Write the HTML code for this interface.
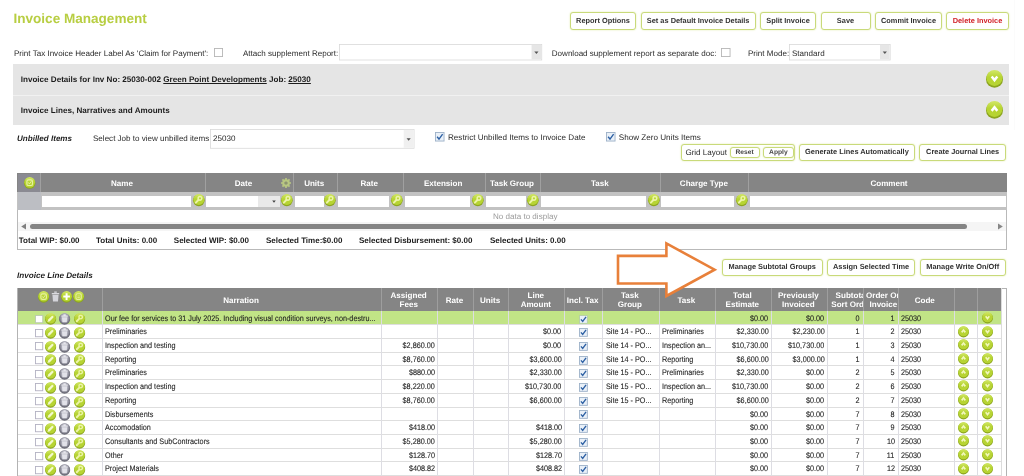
<!DOCTYPE html>
<html><head><meta charset="utf-8"><title>Invoice Management</title>
<style>
html,body{margin:0;padding:0;background:#fff;}
body{width:1024px;height:476px;overflow:hidden;position:relative;font-family:"Liberation Sans", Arial, sans-serif;}
.btn{position:absolute;box-sizing:border-box;border:1px solid #c9da7a;border-radius:3px;background:#fff;text-align:center;font-weight:bold;white-space:nowrap;box-shadow:0 0 2px #e0ebac;}
.hl{position:absolute;background:#a3a3a3;width:1px;}
</style></head><body><div id="wrap" style="position:absolute;left:0;top:0;width:1024px;height:476px;overflow:hidden;will-change:transform;text-rendering:geometricPrecision;">
<div style="position:absolute;top:13.40px;line-height:12.0px;font-size:13.55px;font-weight:bold;color:#b8ce42;font-style:normal;white-space:nowrap;left:13.50px;">Invoice Management</div>
<div class="btn" style="left:570.00px;top:12.00px;width:66.00px;height:17.60px;line-height:15.60px;font-size:7.4px;color:#333;">Report Options</div>
<div class="btn" style="left:640.50px;top:12.00px;width:115.30px;height:17.60px;line-height:15.60px;font-size:7.4px;color:#333;">Set as Default Invoice Details</div>
<div class="btn" style="left:760.00px;top:12.00px;width:56.00px;height:17.60px;line-height:15.60px;font-size:7.4px;color:#333;">Split Invoice</div>
<div class="btn" style="left:820.50px;top:12.00px;width:50.00px;height:17.60px;line-height:15.60px;font-size:7.4px;color:#333;">Save</div>
<div class="btn" style="left:875.00px;top:12.00px;width:67.00px;height:17.60px;line-height:15.60px;font-size:7.4px;color:#333;">Commit Invoice</div>
<div class="btn" style="left:946.00px;top:12.00px;width:63.00px;height:17.60px;line-height:15.60px;font-size:7.4px;color:#d2232a;">Delete Invoice</div>
<div style="position:absolute;top:48.31px;line-height:12.0px;font-size:8.05px;font-weight:normal;color:#2a2a2a;font-style:normal;white-space:nowrap;left:14.00px;">Print Tax Invoice Header Label As &#x27;Claim for Payment&#x27;:</div>
<svg style="position:absolute;left:213.00px;top:47.30px;width:11.00px;height:11.00px" viewBox="-1 -1 11.00 11.00"><rect x="0.45" y="0.45" width="8.10" height="8.10" fill="#fff" stroke="#b6b6b6" stroke-width="0.9"/></svg>
<div style="position:absolute;top:48.31px;line-height:12.0px;font-size:8.05px;font-weight:normal;color:#2a2a2a;font-style:normal;white-space:nowrap;left:243.00px;">Attach supplement Report:</div>
<svg style="position:absolute;left:338.40px;top:43.10px;width:205.20px;height:18.40px" viewBox="-1 -1 205.20 18.40"><rect x="0.4" y="0.4" width="202.40" height="15.60" fill="#fff" stroke="#d9d9d9" stroke-width="0.8"/><rect x="192.60" y="0.9" width="9.70" height="14.60" fill="#e6e6e6"/><path d="M195.35 7.60 h4.2 l-2.1 2.5 Z" fill="#555"/></svg>
<div style="position:absolute;top:48.31px;line-height:12.0px;font-size:8.05px;font-weight:normal;color:#2a2a2a;font-style:normal;white-space:nowrap;left:551.80px;">Download supplement report as separate doc:</div>
<svg style="position:absolute;left:720.00px;top:47.30px;width:11.50px;height:11.00px" viewBox="-1 -1 11.50 11.00"><rect x="0.45" y="0.45" width="8.60" height="8.10" fill="#fff" stroke="#b6b6b6" stroke-width="0.9"/></svg>
<div style="position:absolute;top:48.31px;line-height:12.0px;font-size:8.05px;font-weight:normal;color:#2a2a2a;font-style:normal;white-space:nowrap;left:748.00px;">Print Mode:</div>
<svg style="position:absolute;left:788.00px;top:43.10px;width:103.60px;height:18.40px" viewBox="-1 -1 103.60 18.40"><rect x="0.4" y="0.4" width="100.80" height="15.60" fill="#fff" stroke="#d9d9d9" stroke-width="0.8"/><rect x="91.00" y="0.9" width="9.70" height="14.60" fill="#e6e6e6"/><path d="M93.75 7.60 h4.2 l-2.1 2.5 Z" fill="#555"/></svg>
<div style="position:absolute;top:48.31px;line-height:12.0px;font-size:8.05px;font-weight:normal;color:#2a2a2a;font-style:normal;white-space:nowrap;left:792.00px;">Standard</div>
<div style="position:absolute;left:13.40px;top:63.60px;width:995.60px;height:31.40px;background:#e5e5e5;"></div>
<div style="position:absolute;left:13.40px;top:95.00px;width:995.60px;height:0.80px;background:#f1f1f1;"></div>
<div style="position:absolute;left:13.40px;top:95.80px;width:995.60px;height:29.20px;background:#e5e5e5;"></div>
<div style="position:absolute;top:74.29px;line-height:12.0px;font-size:8.1px;font-weight:bold;color:#1c1c1c;font-style:normal;white-space:nowrap;left:20.70px;">Invoice Details for Inv No: 25030-002 <u>Green Point Developments</u> Job: <u>25030</u></div>
<div style="position:absolute;top:105.29px;line-height:12.0px;font-size:8.1px;font-weight:bold;color:#1c1c1c;font-style:normal;white-space:nowrap;left:20.70px;">Invoice Lines, Narratives and Amounts</div>
<svg style="position:absolute;left:984.50px;top:69.00px;width:19.00px;height:19.00px;" viewBox="-9.50 -9.50 19.00 19.00"><defs><linearGradient id="g22" x1="0" y1="0" x2="0" y2="1"><stop offset="0" stop-color="#d3e86a"/><stop offset="0.45" stop-color="#b7d433"/><stop offset="1" stop-color="#b7d433"/></linearGradient></defs><circle cx="0" cy="0.67" r="8.50" fill="#8ca51f"/><circle cx="0" cy="-0.52" r="7.98" fill="url(#g22)"/><g transform="scale(1.491)"><path d="M-1.9 -1.3 L0 1.1 L1.9 -1.3" stroke="#fff" fill="none" stroke-width="1.7" stroke-linejoin="miter"/></g></svg>
<svg style="position:absolute;left:984.50px;top:100.20px;width:19.00px;height:19.00px;" viewBox="-9.50 -9.50 19.00 19.00"><defs><linearGradient id="g23" x1="0" y1="0" x2="0" y2="1"><stop offset="0" stop-color="#d3e86a"/><stop offset="0.45" stop-color="#b7d433"/><stop offset="1" stop-color="#b7d433"/></linearGradient></defs><circle cx="0" cy="0.67" r="8.50" fill="#8ca51f"/><circle cx="0" cy="-0.52" r="7.98" fill="url(#g23)"/><g transform="scale(1.491)"><path d="M-1.9 0.9 L0 -1.5 L1.9 0.9" stroke="#fff" fill="none" stroke-width="1.7" stroke-linejoin="miter"/></g></svg>
<div style="position:absolute;top:133.31px;line-height:12.0px;font-size:8.05px;font-weight:bold;color:#1c1c1c;font-style:italic;white-space:nowrap;left:17.00px;">Unbilled Items</div>
<div style="position:absolute;top:133.31px;line-height:12.0px;font-size:8.05px;font-weight:normal;color:#2a2a2a;font-style:normal;white-space:nowrap;left:93.00px;">Select Job to view unbilled items</div>
<svg style="position:absolute;left:209.00px;top:127.80px;width:206.50px;height:21.70px" viewBox="-1 -1 206.50 21.70"><rect x="0.4" y="0.4" width="203.70" height="18.90" fill="#fff" stroke="#d9d9d9" stroke-width="0.8"/><rect x="193.80" y="0.9" width="9.80" height="17.90" fill="#f0f0f0"/><path d="M196.60 9.25 h4.2 l-2.1 2.5 Z" fill="#555"/></svg>
<div style="position:absolute;top:133.31px;line-height:12.0px;font-size:8.05px;font-weight:normal;color:#2a2a2a;font-style:normal;white-space:nowrap;left:213.00px;">25030</div>
<svg style="position:absolute;left:434.00px;top:131.40px;width:11.50px;height:11.50px" viewBox="-1 -1 11.50 11.50"><rect x="0.45" y="0.45" width="8.60" height="8.60" fill="#e9f0f8" stroke="#9db1c8" stroke-width="0.9"/><path d="M2.09 4.75 L3.99 7.03 L7.60 2.09" fill="none" stroke="#2c5fa3" stroke-width="1.35"/></svg>
<div style="position:absolute;top:132.29px;line-height:12.0px;font-size:8.12px;font-weight:normal;color:#2a2a2a;font-style:normal;white-space:nowrap;left:448.00px;">Restrict Unbilled Items to Invoice Date</div>
<svg style="position:absolute;left:605.00px;top:131.40px;width:11.50px;height:11.50px" viewBox="-1 -1 11.50 11.50"><rect x="0.45" y="0.45" width="8.60" height="8.60" fill="#e9f0f8" stroke="#9db1c8" stroke-width="0.9"/><path d="M2.09 4.75 L3.99 7.03 L7.60 2.09" fill="none" stroke="#2c5fa3" stroke-width="1.35"/></svg>
<div style="position:absolute;top:132.29px;line-height:12.0px;font-size:8.12px;font-weight:normal;color:#2a2a2a;font-style:normal;white-space:nowrap;left:618.80px;">Show Zero Units Items</div>
<div style="position:absolute;left:681.00px;top:144.00px;width:113.50px;height:16.60px;box-sizing:border-box;border:1px solid #c9da7a;border-radius:3px;background:#fff;box-shadow:0 0 2px #e0ebac;"></div>
<div style="position:absolute;top:147.31px;line-height:12.0px;font-size:8.05px;font-weight:normal;color:#2a2a2a;font-style:normal;white-space:nowrap;left:685.40px;">Grid Layout</div>
<div class="btn" style="left:729.50px;top:146.60px;width:30.00px;height:11.60px;line-height:10.80px;font-size:6.7px;color:#444;">Reset</div>
<div class="btn" style="left:763.00px;top:146.60px;width:30.80px;height:11.60px;line-height:10.80px;font-size:6.7px;color:#444;">Apply</div>
<div class="btn" style="left:798.60px;top:144.20px;width:116.70px;height:16.70px;line-height:14.70px;font-size:7.4px;color:#333;">Generate Lines Automatically</div>
<div class="btn" style="left:919.40px;top:144.20px;width:86.50px;height:16.70px;line-height:14.70px;font-size:7.4px;color:#333;">Create Journal Lines</div>
<div style="position:absolute;left:17.00px;top:173.00px;width:989.50px;height:77.30px;box-sizing:border-box;border:1px solid #b9b9b9;background:#fff;"></div>
<div style="position:absolute;left:17.00px;top:173.00px;width:989.50px;height:19.00px;background:#858585;"></div>
<div style="position:absolute;left:17.00px;top:192.00px;width:989.50px;height:17.60px;background:#c2c2c2;"></div>
<div style="position:absolute;left:17.50px;top:173.50px;width:22.00px;height:18.50px;background:#8a8a92;"></div>
<div style="position:absolute;left:17.50px;top:192.00px;width:23.00px;height:17.60px;background:#bcbec3;"></div>
<div style="position:absolute;left:39.50px;top:173.00px;width:1.00px;height:19.00px;background:#a0a0a0;"></div>
<div style="position:absolute;left:205.00px;top:173.00px;width:1.00px;height:19.00px;background:#a0a0a0;"></div>
<div style="position:absolute;left:292.50px;top:173.00px;width:1.00px;height:19.00px;background:#a0a0a0;"></div>
<div style="position:absolute;left:336.50px;top:173.00px;width:1.00px;height:19.00px;background:#a0a0a0;"></div>
<div style="position:absolute;left:402.50px;top:173.00px;width:1.00px;height:19.00px;background:#a0a0a0;"></div>
<div style="position:absolute;left:484.50px;top:173.00px;width:1.00px;height:19.00px;background:#a0a0a0;"></div>
<div style="position:absolute;left:540.00px;top:173.00px;width:1.00px;height:19.00px;background:#a0a0a0;"></div>
<div style="position:absolute;left:660.25px;top:173.00px;width:1.00px;height:19.00px;background:#a0a0a0;"></div>
<div style="position:absolute;left:748.25px;top:173.00px;width:1.00px;height:19.00px;background:#a0a0a0;"></div>
<div style="position:absolute;top:178.31px;line-height:12.0px;font-size:8.05px;font-weight:bold;color:#fff;font-style:normal;white-space:nowrap;left:-78.05px;width:400px;text-align:center;">Name</div>
<div style="position:absolute;top:178.31px;line-height:12.0px;font-size:8.05px;font-weight:bold;color:#fff;font-style:normal;white-space:nowrap;left:43.50px;width:400px;text-align:center;">Date</div>
<div style="position:absolute;top:178.31px;line-height:12.0px;font-size:8.05px;font-weight:bold;color:#fff;font-style:normal;white-space:nowrap;left:114.20px;width:400px;text-align:center;">Units</div>
<div style="position:absolute;top:178.31px;line-height:12.0px;font-size:8.05px;font-weight:bold;color:#fff;font-style:normal;white-space:nowrap;left:169.20px;width:400px;text-align:center;">Rate</div>
<div style="position:absolute;top:178.31px;line-height:12.0px;font-size:8.05px;font-weight:bold;color:#fff;font-style:normal;white-space:nowrap;left:243.20px;width:400px;text-align:center;">Extension</div>
<div style="position:absolute;top:178.31px;line-height:12.0px;font-size:8.05px;font-weight:bold;color:#fff;font-style:normal;white-space:nowrap;left:311.95px;width:400px;text-align:center;">Task Group</div>
<div style="position:absolute;top:178.31px;line-height:12.0px;font-size:8.05px;font-weight:bold;color:#fff;font-style:normal;white-space:nowrap;left:399.83px;width:400px;text-align:center;">Task</div>
<div style="position:absolute;top:178.31px;line-height:12.0px;font-size:8.05px;font-weight:bold;color:#fff;font-style:normal;white-space:nowrap;left:503.95px;width:400px;text-align:center;">Charge Type</div>
<div style="position:absolute;top:178.31px;line-height:12.0px;font-size:8.05px;font-weight:bold;color:#fff;font-style:normal;white-space:nowrap;left:689.00px;width:400px;text-align:center;">Comment</div>
<svg style="position:absolute;left:22.90px;top:176.30px;width:13.40px;height:13.40px;" viewBox="-6.70 -6.70 13.40 13.40"><defs><linearGradient id="g61" x1="0" y1="0" x2="0" y2="1"><stop offset="0" stop-color="#d3e86a"/><stop offset="0.45" stop-color="#b7d433"/><stop offset="1" stop-color="#b7d433"/></linearGradient></defs><circle cx="0" cy="0.45" r="5.70" fill="#8ca51f"/><circle cx="0" cy="-0.35" r="5.35" fill="url(#g61)"/><g transform="scale(1.000)"><rect x="-2.8" y="-2.8" width="5.6" height="5.6" rx="1.6" stroke="#e6f0a0" fill="none" stroke-width="1.2"/><path d="M-1.5 -0.3 L-0.3 1.2 L1.7 -1.5" stroke="#e6f0a0" fill="none" stroke-width="1.0"/></g></svg>
<svg style="position:absolute;left:280.4px;top:177.3px;width:12px;height:12px;opacity:.8" viewBox="-6 -6 12 12"><g stroke="#c6d980" fill="none"><circle r="2.7" stroke-width="2.2"/><g stroke-width="1.7"><path d="M3.00 0.00 L5.00 0.00"/><path d="M2.12 2.12 L3.54 3.54"/><path d="M0.00 3.00 L0.00 5.00"/><path d="M-2.12 2.12 L-3.54 3.54"/><path d="M-3.00 0.00 L-5.00 0.00"/><path d="M-2.12 -2.12 L-3.54 -3.54"/><path d="M-0.00 -3.00 L-0.00 -5.00"/><path d="M2.12 -2.12 L3.54 -3.54"/></g></g><circle r="1.3" fill="#8f9a68"/></svg>
<div style="position:absolute;left:41.60px;top:195.60px;width:149.40px;height:11.40px;background:#fff;"></div>
<div style="position:absolute;left:206.00px;top:195.60px;width:51.50px;height:11.40px;background:#fff;"></div>
<div style="position:absolute;left:294.50px;top:195.60px;width:29.30px;height:11.40px;background:#fff;"></div>
<div style="position:absolute;left:338.00px;top:195.60px;width:51.00px;height:11.40px;background:#fff;"></div>
<div style="position:absolute;left:404.50px;top:195.60px;width:65.50px;height:11.40px;background:#fff;"></div>
<div style="position:absolute;left:486.00px;top:195.60px;width:40.00px;height:11.40px;background:#fff;"></div>
<div style="position:absolute;left:541.30px;top:195.60px;width:104.70px;height:11.40px;background:#fff;"></div>
<div style="position:absolute;left:661.20px;top:195.60px;width:72.70px;height:11.40px;background:#fff;"></div>
<div style="position:absolute;left:749.50px;top:195.60px;width:256.00px;height:11.40px;background:#fff;"></div>
<div style="position:absolute;left:257.50px;top:195.60px;width:22.00px;height:11.40px;background:#e9e9e9;"></div>
<svg style="position:absolute;left:271.3px;top:200.2px;width:6px;height:4px" viewBox="0 0 6 4"><path d="M1.2 0.6 L4.8 0.6 L3 2.8 Z" fill="#444"/></svg>
<svg style="position:absolute;left:191.85px;top:192.95px;width:13.70px;height:13.70px;" viewBox="-6.85 -6.85 13.70 13.70"><defs><linearGradient id="g74" x1="0" y1="0" x2="0" y2="1"><stop offset="0" stop-color="#d3e86a"/><stop offset="0.45" stop-color="#b7d433"/><stop offset="1" stop-color="#b7d433"/></linearGradient></defs><circle cx="0" cy="0.46" r="5.85" fill="#8ca51f"/><circle cx="0" cy="-0.36" r="5.49" fill="url(#g74)"/><g transform="scale(1.026)"><circle cx="1.1" cy="-1.5" r="1.8" stroke="#ecf4a8" fill="none" stroke-width="1.45"/><path d="M-0.5 0.2 L-2.9 2.7" stroke="#ecf4a8" stroke-width="1.9" stroke-linecap="round"/></g></svg>
<svg style="position:absolute;left:279.65px;top:192.95px;width:13.70px;height:13.70px;" viewBox="-6.85 -6.85 13.70 13.70"><defs><linearGradient id="g75" x1="0" y1="0" x2="0" y2="1"><stop offset="0" stop-color="#d3e86a"/><stop offset="0.45" stop-color="#b7d433"/><stop offset="1" stop-color="#b7d433"/></linearGradient></defs><circle cx="0" cy="0.46" r="5.85" fill="#8ca51f"/><circle cx="0" cy="-0.36" r="5.49" fill="url(#g75)"/><g transform="scale(1.026)"><circle cx="1.1" cy="-1.5" r="1.8" stroke="#ecf4a8" fill="none" stroke-width="1.45"/><path d="M-0.5 0.2 L-2.9 2.7" stroke="#ecf4a8" stroke-width="1.9" stroke-linecap="round"/></g></svg>
<svg style="position:absolute;left:323.45px;top:192.95px;width:13.70px;height:13.70px;" viewBox="-6.85 -6.85 13.70 13.70"><defs><linearGradient id="g76" x1="0" y1="0" x2="0" y2="1"><stop offset="0" stop-color="#d3e86a"/><stop offset="0.45" stop-color="#b7d433"/><stop offset="1" stop-color="#b7d433"/></linearGradient></defs><circle cx="0" cy="0.46" r="5.85" fill="#8ca51f"/><circle cx="0" cy="-0.36" r="5.49" fill="url(#g76)"/><g transform="scale(1.026)"><circle cx="1.1" cy="-1.5" r="1.8" stroke="#ecf4a8" fill="none" stroke-width="1.45"/><path d="M-0.5 0.2 L-2.9 2.7" stroke="#ecf4a8" stroke-width="1.9" stroke-linecap="round"/></g></svg>
<svg style="position:absolute;left:389.65px;top:192.95px;width:13.70px;height:13.70px;" viewBox="-6.85 -6.85 13.70 13.70"><defs><linearGradient id="g77" x1="0" y1="0" x2="0" y2="1"><stop offset="0" stop-color="#d3e86a"/><stop offset="0.45" stop-color="#b7d433"/><stop offset="1" stop-color="#b7d433"/></linearGradient></defs><circle cx="0" cy="0.46" r="5.85" fill="#8ca51f"/><circle cx="0" cy="-0.36" r="5.49" fill="url(#g77)"/><g transform="scale(1.026)"><circle cx="1.1" cy="-1.5" r="1.8" stroke="#ecf4a8" fill="none" stroke-width="1.45"/><path d="M-0.5 0.2 L-2.9 2.7" stroke="#ecf4a8" stroke-width="1.9" stroke-linecap="round"/></g></svg>
<svg style="position:absolute;left:470.95px;top:192.95px;width:13.70px;height:13.70px;" viewBox="-6.85 -6.85 13.70 13.70"><defs><linearGradient id="g78" x1="0" y1="0" x2="0" y2="1"><stop offset="0" stop-color="#d3e86a"/><stop offset="0.45" stop-color="#b7d433"/><stop offset="1" stop-color="#b7d433"/></linearGradient></defs><circle cx="0" cy="0.46" r="5.85" fill="#8ca51f"/><circle cx="0" cy="-0.36" r="5.49" fill="url(#g78)"/><g transform="scale(1.026)"><circle cx="1.1" cy="-1.5" r="1.8" stroke="#ecf4a8" fill="none" stroke-width="1.45"/><path d="M-0.5 0.2 L-2.9 2.7" stroke="#ecf4a8" stroke-width="1.9" stroke-linecap="round"/></g></svg>
<svg style="position:absolute;left:526.45px;top:192.95px;width:13.70px;height:13.70px;" viewBox="-6.85 -6.85 13.70 13.70"><defs><linearGradient id="g79" x1="0" y1="0" x2="0" y2="1"><stop offset="0" stop-color="#d3e86a"/><stop offset="0.45" stop-color="#b7d433"/><stop offset="1" stop-color="#b7d433"/></linearGradient></defs><circle cx="0" cy="0.46" r="5.85" fill="#8ca51f"/><circle cx="0" cy="-0.36" r="5.49" fill="url(#g79)"/><g transform="scale(1.026)"><circle cx="1.1" cy="-1.5" r="1.8" stroke="#ecf4a8" fill="none" stroke-width="1.45"/><path d="M-0.5 0.2 L-2.9 2.7" stroke="#ecf4a8" stroke-width="1.9" stroke-linecap="round"/></g></svg>
<svg style="position:absolute;left:646.85px;top:192.95px;width:13.70px;height:13.70px;" viewBox="-6.85 -6.85 13.70 13.70"><defs><linearGradient id="g80" x1="0" y1="0" x2="0" y2="1"><stop offset="0" stop-color="#d3e86a"/><stop offset="0.45" stop-color="#b7d433"/><stop offset="1" stop-color="#b7d433"/></linearGradient></defs><circle cx="0" cy="0.46" r="5.85" fill="#8ca51f"/><circle cx="0" cy="-0.36" r="5.49" fill="url(#g80)"/><g transform="scale(1.026)"><circle cx="1.1" cy="-1.5" r="1.8" stroke="#ecf4a8" fill="none" stroke-width="1.45"/><path d="M-0.5 0.2 L-2.9 2.7" stroke="#ecf4a8" stroke-width="1.9" stroke-linecap="round"/></g></svg>
<svg style="position:absolute;left:734.65px;top:192.95px;width:13.70px;height:13.70px;" viewBox="-6.85 -6.85 13.70 13.70"><defs><linearGradient id="g81" x1="0" y1="0" x2="0" y2="1"><stop offset="0" stop-color="#d3e86a"/><stop offset="0.45" stop-color="#b7d433"/><stop offset="1" stop-color="#b7d433"/></linearGradient></defs><circle cx="0" cy="0.46" r="5.85" fill="#8ca51f"/><circle cx="0" cy="-0.36" r="5.49" fill="url(#g81)"/><g transform="scale(1.026)"><circle cx="1.1" cy="-1.5" r="1.8" stroke="#ecf4a8" fill="none" stroke-width="1.45"/><path d="M-0.5 0.2 L-2.9 2.7" stroke="#ecf4a8" stroke-width="1.9" stroke-linecap="round"/></g></svg>
<div style="position:absolute;top:211.31px;line-height:12.0px;font-size:8.05px;font-weight:normal;color:#9a9a9a;font-style:normal;white-space:nowrap;left:493.00px;">No data to display</div>
<div style="position:absolute;left:18.00px;top:221.80px;width:987.50px;height:9.60px;background:#f5f5f5;"></div>
<svg style="position:absolute;left:20px;top:223px;width:8px;height:7px" viewBox="0 0 8 7"><path d="M6 0.6 L1.2 3.5 L6 6.4 Z" fill="#7f7f7f"/></svg>
<svg style="position:absolute;left:996px;top:223px;width:8px;height:7px" viewBox="0 0 8 7"><path d="M2 0.6 L6.8 3.5 L2 6.4 Z" fill="#868686"/></svg>
<div style="position:absolute;left:29.50px;top:224.00px;width:937.30px;height:5.20px;background:#858585;border-radius:2.6px;"></div>
<div style="position:absolute;top:235.33px;line-height:12.0px;font-size:8.0px;font-weight:bold;color:#1c1c1c;font-style:normal;white-space:nowrap;left:18.80px;">Total WIP: $0.00</div>
<div style="position:absolute;top:235.33px;line-height:12.0px;font-size:8.0px;font-weight:bold;color:#1c1c1c;font-style:normal;white-space:nowrap;left:96.00px;">Total Units: 0.00</div>
<div style="position:absolute;top:235.33px;line-height:12.0px;font-size:8.0px;font-weight:bold;color:#1c1c1c;font-style:normal;white-space:nowrap;left:173.80px;">Selected WIP: $0.00</div>
<div style="position:absolute;top:235.33px;line-height:12.0px;font-size:8.0px;font-weight:bold;color:#1c1c1c;font-style:normal;white-space:nowrap;left:266.00px;">Selected Time:$0.00</div>
<div style="position:absolute;top:235.33px;line-height:12.0px;font-size:8.0px;font-weight:bold;color:#1c1c1c;font-style:normal;white-space:nowrap;left:359.00px;">Selected Disbursement: $0.00</div>
<div style="position:absolute;top:235.33px;line-height:12.0px;font-size:8.0px;font-weight:bold;color:#1c1c1c;font-style:normal;white-space:nowrap;left:490.00px;">Selected Units: 0.00</div>
<div style="position:absolute;top:270.28px;line-height:12.0px;font-size:8.15px;font-weight:bold;color:#1c1c1c;font-style:italic;white-space:nowrap;left:17.00px;">Invoice Line Details</div>
<div class="btn" style="left:722.00px;top:259.20px;width:100.50px;height:16.60px;line-height:14.60px;font-size:7.4px;color:#333;">Manage Subtotal Groups</div>
<div class="btn" style="left:826.70px;top:259.20px;width:88.80px;height:16.60px;line-height:14.60px;font-size:7.4px;color:#333;">Assign Selected Time</div>
<div class="btn" style="left:919.90px;top:259.20px;width:85.80px;height:16.60px;line-height:14.60px;font-size:7.4px;color:#333;">Manage Write On/Off</div>
<div style="position:absolute;left:17.00px;top:287.60px;width:989.50px;height:192.40px;box-sizing:border-box;border:1px solid #b3b3b3;background:#fff;"></div>
<div style="position:absolute;left:17.50px;top:288.20px;width:983.80px;height:22.80px;background:#858585;"></div>
<div style="position:absolute;left:101.70px;top:288.20px;width:1.00px;height:22.80px;background:#9e9e9e;"></div>
<div style="position:absolute;left:381.00px;top:288.20px;width:1.00px;height:22.80px;background:#9e9e9e;"></div>
<div style="position:absolute;left:437.00px;top:288.20px;width:1.00px;height:22.80px;background:#9e9e9e;"></div>
<div style="position:absolute;left:472.50px;top:288.20px;width:1.00px;height:22.80px;background:#9e9e9e;"></div>
<div style="position:absolute;left:508.25px;top:288.20px;width:1.00px;height:22.80px;background:#9e9e9e;"></div>
<div style="position:absolute;left:564.00px;top:288.20px;width:1.00px;height:22.80px;background:#9e9e9e;"></div>
<div style="position:absolute;left:601.75px;top:288.20px;width:1.00px;height:22.80px;background:#9e9e9e;"></div>
<div style="position:absolute;left:658.50px;top:288.20px;width:1.00px;height:22.80px;background:#9e9e9e;"></div>
<div style="position:absolute;left:714.75px;top:288.20px;width:1.00px;height:22.80px;background:#9e9e9e;"></div>
<div style="position:absolute;left:770.50px;top:288.20px;width:1.00px;height:22.80px;background:#9e9e9e;"></div>
<div style="position:absolute;left:826.80px;top:288.20px;width:1.00px;height:22.80px;background:#9e9e9e;"></div>
<div style="position:absolute;left:862.90px;top:288.20px;width:1.00px;height:22.80px;background:#9e9e9e;"></div>
<div style="position:absolute;left:897.90px;top:288.20px;width:1.00px;height:22.80px;background:#9e9e9e;"></div>
<div style="position:absolute;left:954.20px;top:288.20px;width:1.00px;height:22.80px;background:#9e9e9e;"></div>
<div style="position:absolute;left:977.10px;top:288.20px;width:1.00px;height:22.80px;background:#9e9e9e;"></div>
<div style="position:absolute;left:17.50px;top:311.15px;width:983.80px;height:13.70px;background:#c1e486;"></div>
<div style="position:absolute;left:17.50px;top:324.35px;width:983.80px;height:1.00px;background:#dedede;"></div>
<svg style="position:absolute;left:33.50px;top:313.80px;width:10.20px;height:10.20px" viewBox="-1 -1 10.20 10.20"><rect x="0.45" y="0.45" width="7.30" height="7.30" fill="#fff" stroke="#b9c9b0" stroke-width="0.9"/></svg>
<svg style="position:absolute;left:43.60px;top:312.30px;width:13.20px;height:13.20px;" viewBox="-6.60 -6.60 13.20 13.20"><defs><linearGradient id="g117" x1="0" y1="0" x2="0" y2="1"><stop offset="0" stop-color="#d3e86a"/><stop offset="0.45" stop-color="#b7d433"/><stop offset="1" stop-color="#b7d433"/></linearGradient></defs><circle cx="0" cy="0.44" r="5.60" fill="#8ca51f"/><circle cx="0" cy="-0.34" r="5.26" fill="url(#g117)"/><g transform="scale(0.982)"><path d="M-1.4 1.6 L1.8 -1.6" stroke="#f3f9cc" stroke-width="2.4" stroke-linecap="round"/><path d="M-3.3 3.5 L-2.4 1.4 L-1.2 2.6 Z" fill="#f3f9cc"/></g></svg>
<svg style="position:absolute;left:57.90px;top:312.30px;width:13.20px;height:13.20px;" viewBox="-6.60 -6.60 13.20 13.20"><defs><linearGradient id="g118" x1="0" y1="0" x2="0" y2="1"><stop offset="0" stop-color="#b4b4be"/><stop offset="0.45" stop-color="#82828e"/><stop offset="1" stop-color="#82828e"/></linearGradient></defs><circle cx="0" cy="0.44" r="5.60" fill="#686874"/><circle cx="0" cy="-0.34" r="5.26" fill="url(#g118)"/><g transform="scale(0.982)"><circle r="4" cy="-0.2" fill="#b2b2be" opacity="0.8"/><path d="M-3.1 -2.5 H3.1 M-1.2 -3.7 H1.2" stroke="#e6e6ec" stroke-width="1.4"/><path d="M-2.7 -1.3 H2.7 L2.2 3.7 H-2.2 Z" fill="#e2e2e9"/></g></svg>
<svg style="position:absolute;left:72.50px;top:312.30px;width:13.20px;height:13.20px;" viewBox="-6.60 -6.60 13.20 13.20"><defs><linearGradient id="g119" x1="0" y1="0" x2="0" y2="1"><stop offset="0" stop-color="#d3e86a"/><stop offset="0.45" stop-color="#b7d433"/><stop offset="1" stop-color="#b7d433"/></linearGradient></defs><circle cx="0" cy="0.44" r="5.60" fill="#8ca51f"/><circle cx="0" cy="-0.34" r="5.26" fill="url(#g119)"/><g transform="scale(0.982)"><circle cx="1.1" cy="-1.5" r="1.8" stroke="#ecf4a8" fill="none" stroke-width="1.45"/><path d="M-0.5 0.2 L-2.9 2.7" stroke="#ecf4a8" stroke-width="1.9" stroke-linecap="round"/></g></svg>
<div style="position:absolute;top:313.31px;line-height:12.0px;font-size:8.05px;font-weight:normal;color:#1e1e1e;font-style:normal;white-space:nowrap;left:105.00px;"><span style="display:inline-block;transform:scaleX(0.9);transform-origin:left center;-webkit-text-stroke:0.1px">Our fee for services to 31 July 2025. Including visual condition surveys, non-destru...</span></div>
<svg style="position:absolute;left:578.40px;top:313.50px;width:10.80px;height:10.80px" viewBox="-1 -1 10.80 10.80"><rect x="0.45" y="0.45" width="7.90" height="7.90" fill="#e9f0f8" stroke="#b4cfa6" stroke-width="0.9"/><path d="M1.94 4.40 L3.70 6.51 L7.04 1.94" fill="none" stroke="#2c5fa3" stroke-width="1.35"/></svg>
<div style="position:absolute;top:313.31px;line-height:12.0px;font-size:8.05px;font-weight:normal;color:#1e1e1e;font-style:normal;white-space:nowrap;right:255.60px;"><span style="display:inline-block;transform:scaleX(0.9);transform-origin:right center;-webkit-text-stroke:0.1px">$0.00</span></div>
<div style="position:absolute;top:313.31px;line-height:12.0px;font-size:8.05px;font-weight:normal;color:#1e1e1e;font-style:normal;white-space:nowrap;right:199.50px;"><span style="display:inline-block;transform:scaleX(0.9);transform-origin:right center;-webkit-text-stroke:0.1px">$0.00</span></div>
<div style="position:absolute;top:313.31px;line-height:12.0px;font-size:8.05px;font-weight:normal;color:#1e1e1e;font-style:normal;white-space:nowrap;right:164.40px;"><span style="display:inline-block;transform:scaleX(0.9);transform-origin:right center;-webkit-text-stroke:0.1px">0</span></div>
<div style="position:absolute;top:313.31px;line-height:12.0px;font-size:8.05px;font-weight:normal;color:#1e1e1e;font-style:normal;white-space:nowrap;right:129.40px;"><span style="display:inline-block;transform:scaleX(0.9);transform-origin:right center;-webkit-text-stroke:0.1px">1</span></div>
<div style="position:absolute;top:313.31px;line-height:12.0px;font-size:8.05px;font-weight:normal;color:#1e1e1e;font-style:normal;white-space:nowrap;left:901.00px;"><span style="display:inline-block;transform:scaleX(0.9);transform-origin:left center;-webkit-text-stroke:0.1px">25030</span></div>
<svg style="position:absolute;left:980.50px;top:310.90px;width:13.00px;height:13.00px;" viewBox="-6.50 -6.50 13.00 13.00"><defs><linearGradient id="g127" x1="0" y1="0" x2="0" y2="1"><stop offset="0" stop-color="#d3e86a"/><stop offset="0.45" stop-color="#b7d433"/><stop offset="1" stop-color="#b7d433"/></linearGradient></defs><circle cx="0" cy="0.43" r="5.50" fill="#8ca51f"/><circle cx="0" cy="-0.34" r="5.16" fill="url(#g127)"/><g transform="scale(0.965)"><path d="M-1.9 -1.3 L0 1.1 L1.9 -1.3" stroke="#f1f7bc" fill="none" stroke-width="1.7" stroke-linejoin="miter"/></g></svg>
<div style="position:absolute;left:17.50px;top:338.05px;width:983.80px;height:1.00px;background:#dedede;"></div>
<svg style="position:absolute;left:33.50px;top:327.50px;width:10.20px;height:10.20px" viewBox="-1 -1 10.20 10.20"><rect x="0.45" y="0.45" width="7.30" height="7.30" fill="#fff" stroke="#b3b1c2" stroke-width="0.9"/></svg>
<svg style="position:absolute;left:43.60px;top:326.00px;width:13.20px;height:13.20px;" viewBox="-6.60 -6.60 13.20 13.20"><defs><linearGradient id="g130" x1="0" y1="0" x2="0" y2="1"><stop offset="0" stop-color="#d3e86a"/><stop offset="0.45" stop-color="#b7d433"/><stop offset="1" stop-color="#b7d433"/></linearGradient></defs><circle cx="0" cy="0.44" r="5.60" fill="#8ca51f"/><circle cx="0" cy="-0.34" r="5.26" fill="url(#g130)"/><g transform="scale(0.982)"><path d="M-1.4 1.6 L1.8 -1.6" stroke="#f3f9cc" stroke-width="2.4" stroke-linecap="round"/><path d="M-3.3 3.5 L-2.4 1.4 L-1.2 2.6 Z" fill="#f3f9cc"/></g></svg>
<svg style="position:absolute;left:57.90px;top:326.00px;width:13.20px;height:13.20px;" viewBox="-6.60 -6.60 13.20 13.20"><defs><linearGradient id="g131" x1="0" y1="0" x2="0" y2="1"><stop offset="0" stop-color="#b4b4be"/><stop offset="0.45" stop-color="#82828e"/><stop offset="1" stop-color="#82828e"/></linearGradient></defs><circle cx="0" cy="0.44" r="5.60" fill="#686874"/><circle cx="0" cy="-0.34" r="5.26" fill="url(#g131)"/><g transform="scale(0.982)"><circle r="4" cy="-0.2" fill="#b2b2be" opacity="0.8"/><path d="M-3.1 -2.5 H3.1 M-1.2 -3.7 H1.2" stroke="#e6e6ec" stroke-width="1.4"/><path d="M-2.7 -1.3 H2.7 L2.2 3.7 H-2.2 Z" fill="#e2e2e9"/></g></svg>
<svg style="position:absolute;left:72.50px;top:326.00px;width:13.20px;height:13.20px;" viewBox="-6.60 -6.60 13.20 13.20"><defs><linearGradient id="g132" x1="0" y1="0" x2="0" y2="1"><stop offset="0" stop-color="#d3e86a"/><stop offset="0.45" stop-color="#b7d433"/><stop offset="1" stop-color="#b7d433"/></linearGradient></defs><circle cx="0" cy="0.44" r="5.60" fill="#8ca51f"/><circle cx="0" cy="-0.34" r="5.26" fill="url(#g132)"/><g transform="scale(0.982)"><circle cx="1.1" cy="-1.5" r="1.8" stroke="#ecf4a8" fill="none" stroke-width="1.45"/><path d="M-0.5 0.2 L-2.9 2.7" stroke="#ecf4a8" stroke-width="1.9" stroke-linecap="round"/></g></svg>
<div style="position:absolute;top:326.31px;line-height:12.0px;font-size:8.05px;font-weight:normal;color:#1e1e1e;font-style:normal;white-space:nowrap;left:105.00px;"><span style="display:inline-block;transform:scaleX(0.9);transform-origin:left center;-webkit-text-stroke:0.1px">Preliminaries</span></div>
<div style="position:absolute;top:326.31px;line-height:12.0px;font-size:8.05px;font-weight:normal;color:#1e1e1e;font-style:normal;white-space:nowrap;right:462.40px;"><span style="display:inline-block;transform:scaleX(0.9);transform-origin:right center;-webkit-text-stroke:0.1px">$0.00</span></div>
<svg style="position:absolute;left:578.40px;top:327.20px;width:10.80px;height:10.80px" viewBox="-1 -1 10.80 10.80"><rect x="0.45" y="0.45" width="7.90" height="7.90" fill="#e9f0f8" stroke="#9db1c8" stroke-width="0.9"/><path d="M1.94 4.40 L3.70 6.51 L7.04 1.94" fill="none" stroke="#2c5fa3" stroke-width="1.35"/></svg>
<div style="position:absolute;top:326.31px;line-height:12.0px;font-size:8.05px;font-weight:normal;color:#1e1e1e;font-style:normal;white-space:nowrap;left:606.00px;"><span style="display:inline-block;transform:scaleX(0.9);transform-origin:left center;-webkit-text-stroke:0.1px">Site 14 - PO...</span></div>
<div style="position:absolute;top:326.31px;line-height:12.0px;font-size:8.05px;font-weight:normal;color:#1e1e1e;font-style:normal;white-space:nowrap;left:662.30px;"><span style="display:inline-block;transform:scaleX(0.9);transform-origin:left center;-webkit-text-stroke:0.1px">Preliminaries</span></div>
<div style="position:absolute;top:326.31px;line-height:12.0px;font-size:8.05px;font-weight:normal;color:#1e1e1e;font-style:normal;white-space:nowrap;right:255.60px;"><span style="display:inline-block;transform:scaleX(0.9);transform-origin:right center;-webkit-text-stroke:0.1px">$2,330.00</span></div>
<div style="position:absolute;top:326.31px;line-height:12.0px;font-size:8.05px;font-weight:normal;color:#1e1e1e;font-style:normal;white-space:nowrap;right:199.50px;"><span style="display:inline-block;transform:scaleX(0.9);transform-origin:right center;-webkit-text-stroke:0.1px">$2,230.00</span></div>
<div style="position:absolute;top:326.31px;line-height:12.0px;font-size:8.05px;font-weight:normal;color:#1e1e1e;font-style:normal;white-space:nowrap;right:164.40px;"><span style="display:inline-block;transform:scaleX(0.9);transform-origin:right center;-webkit-text-stroke:0.1px">1</span></div>
<div style="position:absolute;top:326.31px;line-height:12.0px;font-size:8.05px;font-weight:normal;color:#1e1e1e;font-style:normal;white-space:nowrap;right:129.40px;"><span style="display:inline-block;transform:scaleX(0.9);transform-origin:right center;-webkit-text-stroke:0.1px">2</span></div>
<div style="position:absolute;top:326.31px;line-height:12.0px;font-size:8.05px;font-weight:normal;color:#1e1e1e;font-style:normal;white-space:nowrap;left:901.00px;"><span style="display:inline-block;transform:scaleX(0.9);transform-origin:left center;-webkit-text-stroke:0.1px">25030</span></div>
<svg style="position:absolute;left:956.90px;top:324.60px;width:13.00px;height:13.00px;" viewBox="-6.50 -6.50 13.00 13.00"><defs><linearGradient id="g143" x1="0" y1="0" x2="0" y2="1"><stop offset="0" stop-color="#d3e86a"/><stop offset="0.45" stop-color="#b7d433"/><stop offset="1" stop-color="#b7d433"/></linearGradient></defs><circle cx="0" cy="0.43" r="5.50" fill="#8ca51f"/><circle cx="0" cy="-0.34" r="5.16" fill="url(#g143)"/><g transform="scale(0.965)"><path d="M-1.9 0.9 L0 -1.5 L1.9 0.9" stroke="#f1f7bc" fill="none" stroke-width="1.7" stroke-linejoin="miter"/></g></svg>
<svg style="position:absolute;left:980.50px;top:324.60px;width:13.00px;height:13.00px;" viewBox="-6.50 -6.50 13.00 13.00"><defs><linearGradient id="g144" x1="0" y1="0" x2="0" y2="1"><stop offset="0" stop-color="#d3e86a"/><stop offset="0.45" stop-color="#b7d433"/><stop offset="1" stop-color="#b7d433"/></linearGradient></defs><circle cx="0" cy="0.43" r="5.50" fill="#8ca51f"/><circle cx="0" cy="-0.34" r="5.16" fill="url(#g144)"/><g transform="scale(0.965)"><path d="M-1.9 -1.3 L0 1.1 L1.9 -1.3" stroke="#f1f7bc" fill="none" stroke-width="1.7" stroke-linejoin="miter"/></g></svg>
<div style="position:absolute;left:17.50px;top:351.75px;width:983.80px;height:1.00px;background:#dedede;"></div>
<svg style="position:absolute;left:33.50px;top:341.20px;width:10.20px;height:10.20px" viewBox="-1 -1 10.20 10.20"><rect x="0.45" y="0.45" width="7.30" height="7.30" fill="#fff" stroke="#b3b1c2" stroke-width="0.9"/></svg>
<svg style="position:absolute;left:43.60px;top:339.70px;width:13.20px;height:13.20px;" viewBox="-6.60 -6.60 13.20 13.20"><defs><linearGradient id="g147" x1="0" y1="0" x2="0" y2="1"><stop offset="0" stop-color="#d3e86a"/><stop offset="0.45" stop-color="#b7d433"/><stop offset="1" stop-color="#b7d433"/></linearGradient></defs><circle cx="0" cy="0.44" r="5.60" fill="#8ca51f"/><circle cx="0" cy="-0.34" r="5.26" fill="url(#g147)"/><g transform="scale(0.982)"><path d="M-1.4 1.6 L1.8 -1.6" stroke="#f3f9cc" stroke-width="2.4" stroke-linecap="round"/><path d="M-3.3 3.5 L-2.4 1.4 L-1.2 2.6 Z" fill="#f3f9cc"/></g></svg>
<svg style="position:absolute;left:57.90px;top:339.70px;width:13.20px;height:13.20px;" viewBox="-6.60 -6.60 13.20 13.20"><defs><linearGradient id="g148" x1="0" y1="0" x2="0" y2="1"><stop offset="0" stop-color="#b4b4be"/><stop offset="0.45" stop-color="#82828e"/><stop offset="1" stop-color="#82828e"/></linearGradient></defs><circle cx="0" cy="0.44" r="5.60" fill="#686874"/><circle cx="0" cy="-0.34" r="5.26" fill="url(#g148)"/><g transform="scale(0.982)"><circle r="4" cy="-0.2" fill="#b2b2be" opacity="0.8"/><path d="M-3.1 -2.5 H3.1 M-1.2 -3.7 H1.2" stroke="#e6e6ec" stroke-width="1.4"/><path d="M-2.7 -1.3 H2.7 L2.2 3.7 H-2.2 Z" fill="#e2e2e9"/></g></svg>
<svg style="position:absolute;left:72.50px;top:339.70px;width:13.20px;height:13.20px;" viewBox="-6.60 -6.60 13.20 13.20"><defs><linearGradient id="g149" x1="0" y1="0" x2="0" y2="1"><stop offset="0" stop-color="#d3e86a"/><stop offset="0.45" stop-color="#b7d433"/><stop offset="1" stop-color="#b7d433"/></linearGradient></defs><circle cx="0" cy="0.44" r="5.60" fill="#8ca51f"/><circle cx="0" cy="-0.34" r="5.26" fill="url(#g149)"/><g transform="scale(0.982)"><circle cx="1.1" cy="-1.5" r="1.8" stroke="#ecf4a8" fill="none" stroke-width="1.45"/><path d="M-0.5 0.2 L-2.9 2.7" stroke="#ecf4a8" stroke-width="1.9" stroke-linecap="round"/></g></svg>
<div style="position:absolute;top:340.31px;line-height:12.0px;font-size:8.05px;font-weight:normal;color:#1e1e1e;font-style:normal;white-space:nowrap;left:105.00px;"><span style="display:inline-block;transform:scaleX(0.9);transform-origin:left center;-webkit-text-stroke:0.1px">Inspection and testing</span></div>
<div style="position:absolute;top:340.31px;line-height:12.0px;font-size:8.05px;font-weight:normal;color:#1e1e1e;font-style:normal;white-space:nowrap;right:589.40px;"><span style="display:inline-block;transform:scaleX(0.9);transform-origin:right center;-webkit-text-stroke:0.1px">$2,860.00</span></div>
<div style="position:absolute;top:340.31px;line-height:12.0px;font-size:8.05px;font-weight:normal;color:#1e1e1e;font-style:normal;white-space:nowrap;right:462.40px;"><span style="display:inline-block;transform:scaleX(0.9);transform-origin:right center;-webkit-text-stroke:0.1px">$0.00</span></div>
<svg style="position:absolute;left:578.40px;top:340.90px;width:10.80px;height:10.80px" viewBox="-1 -1 10.80 10.80"><rect x="0.45" y="0.45" width="7.90" height="7.90" fill="#e9f0f8" stroke="#9db1c8" stroke-width="0.9"/><path d="M1.94 4.40 L3.70 6.51 L7.04 1.94" fill="none" stroke="#2c5fa3" stroke-width="1.35"/></svg>
<div style="position:absolute;top:340.31px;line-height:12.0px;font-size:8.05px;font-weight:normal;color:#1e1e1e;font-style:normal;white-space:nowrap;left:606.00px;"><span style="display:inline-block;transform:scaleX(0.9);transform-origin:left center;-webkit-text-stroke:0.1px">Site 14 - PO...</span></div>
<div style="position:absolute;top:340.31px;line-height:12.0px;font-size:8.05px;font-weight:normal;color:#1e1e1e;font-style:normal;white-space:nowrap;left:662.30px;"><span style="display:inline-block;transform:scaleX(0.9);transform-origin:left center;-webkit-text-stroke:0.1px">Inspection an...</span></div>
<div style="position:absolute;top:340.31px;line-height:12.0px;font-size:8.05px;font-weight:normal;color:#1e1e1e;font-style:normal;white-space:nowrap;right:255.60px;"><span style="display:inline-block;transform:scaleX(0.9);transform-origin:right center;-webkit-text-stroke:0.1px">$10,730.00</span></div>
<div style="position:absolute;top:340.31px;line-height:12.0px;font-size:8.05px;font-weight:normal;color:#1e1e1e;font-style:normal;white-space:nowrap;right:199.50px;"><span style="display:inline-block;transform:scaleX(0.9);transform-origin:right center;-webkit-text-stroke:0.1px">$10,730.00</span></div>
<div style="position:absolute;top:340.31px;line-height:12.0px;font-size:8.05px;font-weight:normal;color:#1e1e1e;font-style:normal;white-space:nowrap;right:164.40px;"><span style="display:inline-block;transform:scaleX(0.9);transform-origin:right center;-webkit-text-stroke:0.1px">1</span></div>
<div style="position:absolute;top:340.31px;line-height:12.0px;font-size:8.05px;font-weight:normal;color:#1e1e1e;font-style:normal;white-space:nowrap;right:129.40px;"><span style="display:inline-block;transform:scaleX(0.9);transform-origin:right center;-webkit-text-stroke:0.1px">3</span></div>
<div style="position:absolute;top:340.31px;line-height:12.0px;font-size:8.05px;font-weight:normal;color:#1e1e1e;font-style:normal;white-space:nowrap;left:901.00px;"><span style="display:inline-block;transform:scaleX(0.9);transform-origin:left center;-webkit-text-stroke:0.1px">25030</span></div>
<svg style="position:absolute;left:956.90px;top:338.30px;width:13.00px;height:13.00px;" viewBox="-6.50 -6.50 13.00 13.00"><defs><linearGradient id="g161" x1="0" y1="0" x2="0" y2="1"><stop offset="0" stop-color="#d3e86a"/><stop offset="0.45" stop-color="#b7d433"/><stop offset="1" stop-color="#b7d433"/></linearGradient></defs><circle cx="0" cy="0.43" r="5.50" fill="#8ca51f"/><circle cx="0" cy="-0.34" r="5.16" fill="url(#g161)"/><g transform="scale(0.965)"><path d="M-1.9 0.9 L0 -1.5 L1.9 0.9" stroke="#f1f7bc" fill="none" stroke-width="1.7" stroke-linejoin="miter"/></g></svg>
<svg style="position:absolute;left:980.50px;top:338.30px;width:13.00px;height:13.00px;" viewBox="-6.50 -6.50 13.00 13.00"><defs><linearGradient id="g162" x1="0" y1="0" x2="0" y2="1"><stop offset="0" stop-color="#d3e86a"/><stop offset="0.45" stop-color="#b7d433"/><stop offset="1" stop-color="#b7d433"/></linearGradient></defs><circle cx="0" cy="0.43" r="5.50" fill="#8ca51f"/><circle cx="0" cy="-0.34" r="5.16" fill="url(#g162)"/><g transform="scale(0.965)"><path d="M-1.9 -1.3 L0 1.1 L1.9 -1.3" stroke="#f1f7bc" fill="none" stroke-width="1.7" stroke-linejoin="miter"/></g></svg>
<div style="position:absolute;left:17.50px;top:365.45px;width:983.80px;height:1.00px;background:#dedede;"></div>
<svg style="position:absolute;left:33.50px;top:354.90px;width:10.20px;height:10.20px" viewBox="-1 -1 10.20 10.20"><rect x="0.45" y="0.45" width="7.30" height="7.30" fill="#fff" stroke="#b3b1c2" stroke-width="0.9"/></svg>
<svg style="position:absolute;left:43.60px;top:353.40px;width:13.20px;height:13.20px;" viewBox="-6.60 -6.60 13.20 13.20"><defs><linearGradient id="g165" x1="0" y1="0" x2="0" y2="1"><stop offset="0" stop-color="#d3e86a"/><stop offset="0.45" stop-color="#b7d433"/><stop offset="1" stop-color="#b7d433"/></linearGradient></defs><circle cx="0" cy="0.44" r="5.60" fill="#8ca51f"/><circle cx="0" cy="-0.34" r="5.26" fill="url(#g165)"/><g transform="scale(0.982)"><path d="M-1.4 1.6 L1.8 -1.6" stroke="#f3f9cc" stroke-width="2.4" stroke-linecap="round"/><path d="M-3.3 3.5 L-2.4 1.4 L-1.2 2.6 Z" fill="#f3f9cc"/></g></svg>
<svg style="position:absolute;left:57.90px;top:353.40px;width:13.20px;height:13.20px;" viewBox="-6.60 -6.60 13.20 13.20"><defs><linearGradient id="g166" x1="0" y1="0" x2="0" y2="1"><stop offset="0" stop-color="#b4b4be"/><stop offset="0.45" stop-color="#82828e"/><stop offset="1" stop-color="#82828e"/></linearGradient></defs><circle cx="0" cy="0.44" r="5.60" fill="#686874"/><circle cx="0" cy="-0.34" r="5.26" fill="url(#g166)"/><g transform="scale(0.982)"><circle r="4" cy="-0.2" fill="#b2b2be" opacity="0.8"/><path d="M-3.1 -2.5 H3.1 M-1.2 -3.7 H1.2" stroke="#e6e6ec" stroke-width="1.4"/><path d="M-2.7 -1.3 H2.7 L2.2 3.7 H-2.2 Z" fill="#e2e2e9"/></g></svg>
<svg style="position:absolute;left:72.50px;top:353.40px;width:13.20px;height:13.20px;" viewBox="-6.60 -6.60 13.20 13.20"><defs><linearGradient id="g167" x1="0" y1="0" x2="0" y2="1"><stop offset="0" stop-color="#d3e86a"/><stop offset="0.45" stop-color="#b7d433"/><stop offset="1" stop-color="#b7d433"/></linearGradient></defs><circle cx="0" cy="0.44" r="5.60" fill="#8ca51f"/><circle cx="0" cy="-0.34" r="5.26" fill="url(#g167)"/><g transform="scale(0.982)"><circle cx="1.1" cy="-1.5" r="1.8" stroke="#ecf4a8" fill="none" stroke-width="1.45"/><path d="M-0.5 0.2 L-2.9 2.7" stroke="#ecf4a8" stroke-width="1.9" stroke-linecap="round"/></g></svg>
<div style="position:absolute;top:354.31px;line-height:12.0px;font-size:8.05px;font-weight:normal;color:#1e1e1e;font-style:normal;white-space:nowrap;left:105.00px;"><span style="display:inline-block;transform:scaleX(0.9);transform-origin:left center;-webkit-text-stroke:0.1px">Reporting</span></div>
<div style="position:absolute;top:354.31px;line-height:12.0px;font-size:8.05px;font-weight:normal;color:#1e1e1e;font-style:normal;white-space:nowrap;right:589.40px;"><span style="display:inline-block;transform:scaleX(0.9);transform-origin:right center;-webkit-text-stroke:0.1px">$8,760.00</span></div>
<div style="position:absolute;top:354.31px;line-height:12.0px;font-size:8.05px;font-weight:normal;color:#1e1e1e;font-style:normal;white-space:nowrap;right:462.40px;"><span style="display:inline-block;transform:scaleX(0.9);transform-origin:right center;-webkit-text-stroke:0.1px">$3,600.00</span></div>
<svg style="position:absolute;left:578.40px;top:354.60px;width:10.80px;height:10.80px" viewBox="-1 -1 10.80 10.80"><rect x="0.45" y="0.45" width="7.90" height="7.90" fill="#e9f0f8" stroke="#9db1c8" stroke-width="0.9"/><path d="M1.94 4.40 L3.70 6.51 L7.04 1.94" fill="none" stroke="#2c5fa3" stroke-width="1.35"/></svg>
<div style="position:absolute;top:354.31px;line-height:12.0px;font-size:8.05px;font-weight:normal;color:#1e1e1e;font-style:normal;white-space:nowrap;left:606.00px;"><span style="display:inline-block;transform:scaleX(0.9);transform-origin:left center;-webkit-text-stroke:0.1px">Site 14 - PO...</span></div>
<div style="position:absolute;top:354.31px;line-height:12.0px;font-size:8.05px;font-weight:normal;color:#1e1e1e;font-style:normal;white-space:nowrap;left:662.30px;"><span style="display:inline-block;transform:scaleX(0.9);transform-origin:left center;-webkit-text-stroke:0.1px">Reporting</span></div>
<div style="position:absolute;top:354.31px;line-height:12.0px;font-size:8.05px;font-weight:normal;color:#1e1e1e;font-style:normal;white-space:nowrap;right:255.60px;"><span style="display:inline-block;transform:scaleX(0.9);transform-origin:right center;-webkit-text-stroke:0.1px">$6,600.00</span></div>
<div style="position:absolute;top:354.31px;line-height:12.0px;font-size:8.05px;font-weight:normal;color:#1e1e1e;font-style:normal;white-space:nowrap;right:199.50px;"><span style="display:inline-block;transform:scaleX(0.9);transform-origin:right center;-webkit-text-stroke:0.1px">$3,000.00</span></div>
<div style="position:absolute;top:354.31px;line-height:12.0px;font-size:8.05px;font-weight:normal;color:#1e1e1e;font-style:normal;white-space:nowrap;right:164.40px;"><span style="display:inline-block;transform:scaleX(0.9);transform-origin:right center;-webkit-text-stroke:0.1px">1</span></div>
<div style="position:absolute;top:354.31px;line-height:12.0px;font-size:8.05px;font-weight:normal;color:#1e1e1e;font-style:normal;white-space:nowrap;right:129.40px;"><span style="display:inline-block;transform:scaleX(0.9);transform-origin:right center;-webkit-text-stroke:0.1px">4</span></div>
<div style="position:absolute;top:354.31px;line-height:12.0px;font-size:8.05px;font-weight:normal;color:#1e1e1e;font-style:normal;white-space:nowrap;left:901.00px;"><span style="display:inline-block;transform:scaleX(0.9);transform-origin:left center;-webkit-text-stroke:0.1px">25030</span></div>
<svg style="position:absolute;left:956.90px;top:352.00px;width:13.00px;height:13.00px;" viewBox="-6.50 -6.50 13.00 13.00"><defs><linearGradient id="g179" x1="0" y1="0" x2="0" y2="1"><stop offset="0" stop-color="#d3e86a"/><stop offset="0.45" stop-color="#b7d433"/><stop offset="1" stop-color="#b7d433"/></linearGradient></defs><circle cx="0" cy="0.43" r="5.50" fill="#8ca51f"/><circle cx="0" cy="-0.34" r="5.16" fill="url(#g179)"/><g transform="scale(0.965)"><path d="M-1.9 0.9 L0 -1.5 L1.9 0.9" stroke="#f1f7bc" fill="none" stroke-width="1.7" stroke-linejoin="miter"/></g></svg>
<svg style="position:absolute;left:980.50px;top:352.00px;width:13.00px;height:13.00px;" viewBox="-6.50 -6.50 13.00 13.00"><defs><linearGradient id="g180" x1="0" y1="0" x2="0" y2="1"><stop offset="0" stop-color="#d3e86a"/><stop offset="0.45" stop-color="#b7d433"/><stop offset="1" stop-color="#b7d433"/></linearGradient></defs><circle cx="0" cy="0.43" r="5.50" fill="#8ca51f"/><circle cx="0" cy="-0.34" r="5.16" fill="url(#g180)"/><g transform="scale(0.965)"><path d="M-1.9 -1.3 L0 1.1 L1.9 -1.3" stroke="#f1f7bc" fill="none" stroke-width="1.7" stroke-linejoin="miter"/></g></svg>
<div style="position:absolute;left:17.50px;top:379.15px;width:983.80px;height:1.00px;background:#dedede;"></div>
<svg style="position:absolute;left:33.50px;top:368.60px;width:10.20px;height:10.20px" viewBox="-1 -1 10.20 10.20"><rect x="0.45" y="0.45" width="7.30" height="7.30" fill="#fff" stroke="#b3b1c2" stroke-width="0.9"/></svg>
<svg style="position:absolute;left:43.60px;top:367.10px;width:13.20px;height:13.20px;" viewBox="-6.60 -6.60 13.20 13.20"><defs><linearGradient id="g183" x1="0" y1="0" x2="0" y2="1"><stop offset="0" stop-color="#d3e86a"/><stop offset="0.45" stop-color="#b7d433"/><stop offset="1" stop-color="#b7d433"/></linearGradient></defs><circle cx="0" cy="0.44" r="5.60" fill="#8ca51f"/><circle cx="0" cy="-0.34" r="5.26" fill="url(#g183)"/><g transform="scale(0.982)"><path d="M-1.4 1.6 L1.8 -1.6" stroke="#f3f9cc" stroke-width="2.4" stroke-linecap="round"/><path d="M-3.3 3.5 L-2.4 1.4 L-1.2 2.6 Z" fill="#f3f9cc"/></g></svg>
<svg style="position:absolute;left:57.90px;top:367.10px;width:13.20px;height:13.20px;" viewBox="-6.60 -6.60 13.20 13.20"><defs><linearGradient id="g184" x1="0" y1="0" x2="0" y2="1"><stop offset="0" stop-color="#b4b4be"/><stop offset="0.45" stop-color="#82828e"/><stop offset="1" stop-color="#82828e"/></linearGradient></defs><circle cx="0" cy="0.44" r="5.60" fill="#686874"/><circle cx="0" cy="-0.34" r="5.26" fill="url(#g184)"/><g transform="scale(0.982)"><circle r="4" cy="-0.2" fill="#b2b2be" opacity="0.8"/><path d="M-3.1 -2.5 H3.1 M-1.2 -3.7 H1.2" stroke="#e6e6ec" stroke-width="1.4"/><path d="M-2.7 -1.3 H2.7 L2.2 3.7 H-2.2 Z" fill="#e2e2e9"/></g></svg>
<svg style="position:absolute;left:72.50px;top:367.10px;width:13.20px;height:13.20px;" viewBox="-6.60 -6.60 13.20 13.20"><defs><linearGradient id="g185" x1="0" y1="0" x2="0" y2="1"><stop offset="0" stop-color="#d3e86a"/><stop offset="0.45" stop-color="#b7d433"/><stop offset="1" stop-color="#b7d433"/></linearGradient></defs><circle cx="0" cy="0.44" r="5.60" fill="#8ca51f"/><circle cx="0" cy="-0.34" r="5.26" fill="url(#g185)"/><g transform="scale(0.982)"><circle cx="1.1" cy="-1.5" r="1.8" stroke="#ecf4a8" fill="none" stroke-width="1.45"/><path d="M-0.5 0.2 L-2.9 2.7" stroke="#ecf4a8" stroke-width="1.9" stroke-linecap="round"/></g></svg>
<div style="position:absolute;top:367.31px;line-height:12.0px;font-size:8.05px;font-weight:normal;color:#1e1e1e;font-style:normal;white-space:nowrap;left:105.00px;"><span style="display:inline-block;transform:scaleX(0.9);transform-origin:left center;-webkit-text-stroke:0.1px">Preliminaries</span></div>
<div style="position:absolute;top:367.31px;line-height:12.0px;font-size:8.05px;font-weight:normal;color:#1e1e1e;font-style:normal;white-space:nowrap;right:589.40px;"><span style="display:inline-block;transform:scaleX(0.9);transform-origin:right center;-webkit-text-stroke:0.1px">$880.00</span></div>
<div style="position:absolute;top:367.31px;line-height:12.0px;font-size:8.05px;font-weight:normal;color:#1e1e1e;font-style:normal;white-space:nowrap;right:462.40px;"><span style="display:inline-block;transform:scaleX(0.9);transform-origin:right center;-webkit-text-stroke:0.1px">$2,330.00</span></div>
<svg style="position:absolute;left:578.40px;top:368.30px;width:10.80px;height:10.80px" viewBox="-1 -1 10.80 10.80"><rect x="0.45" y="0.45" width="7.90" height="7.90" fill="#e9f0f8" stroke="#9db1c8" stroke-width="0.9"/><path d="M1.94 4.40 L3.70 6.51 L7.04 1.94" fill="none" stroke="#2c5fa3" stroke-width="1.35"/></svg>
<div style="position:absolute;top:367.31px;line-height:12.0px;font-size:8.05px;font-weight:normal;color:#1e1e1e;font-style:normal;white-space:nowrap;left:606.00px;"><span style="display:inline-block;transform:scaleX(0.9);transform-origin:left center;-webkit-text-stroke:0.1px">Site 15 - PO...</span></div>
<div style="position:absolute;top:367.31px;line-height:12.0px;font-size:8.05px;font-weight:normal;color:#1e1e1e;font-style:normal;white-space:nowrap;left:662.30px;"><span style="display:inline-block;transform:scaleX(0.9);transform-origin:left center;-webkit-text-stroke:0.1px">Preliminaries</span></div>
<div style="position:absolute;top:367.31px;line-height:12.0px;font-size:8.05px;font-weight:normal;color:#1e1e1e;font-style:normal;white-space:nowrap;right:255.60px;"><span style="display:inline-block;transform:scaleX(0.9);transform-origin:right center;-webkit-text-stroke:0.1px">$2,330.00</span></div>
<div style="position:absolute;top:367.31px;line-height:12.0px;font-size:8.05px;font-weight:normal;color:#1e1e1e;font-style:normal;white-space:nowrap;right:199.50px;"><span style="display:inline-block;transform:scaleX(0.9);transform-origin:right center;-webkit-text-stroke:0.1px">$0.00</span></div>
<div style="position:absolute;top:367.31px;line-height:12.0px;font-size:8.05px;font-weight:normal;color:#1e1e1e;font-style:normal;white-space:nowrap;right:164.40px;"><span style="display:inline-block;transform:scaleX(0.9);transform-origin:right center;-webkit-text-stroke:0.1px">2</span></div>
<div style="position:absolute;top:367.31px;line-height:12.0px;font-size:8.05px;font-weight:normal;color:#1e1e1e;font-style:normal;white-space:nowrap;right:129.40px;"><span style="display:inline-block;transform:scaleX(0.9);transform-origin:right center;-webkit-text-stroke:0.1px">5</span></div>
<div style="position:absolute;top:367.31px;line-height:12.0px;font-size:8.05px;font-weight:normal;color:#1e1e1e;font-style:normal;white-space:nowrap;left:901.00px;"><span style="display:inline-block;transform:scaleX(0.9);transform-origin:left center;-webkit-text-stroke:0.1px">25030</span></div>
<svg style="position:absolute;left:956.90px;top:365.70px;width:13.00px;height:13.00px;" viewBox="-6.50 -6.50 13.00 13.00"><defs><linearGradient id="g197" x1="0" y1="0" x2="0" y2="1"><stop offset="0" stop-color="#d3e86a"/><stop offset="0.45" stop-color="#b7d433"/><stop offset="1" stop-color="#b7d433"/></linearGradient></defs><circle cx="0" cy="0.43" r="5.50" fill="#8ca51f"/><circle cx="0" cy="-0.34" r="5.16" fill="url(#g197)"/><g transform="scale(0.965)"><path d="M-1.9 0.9 L0 -1.5 L1.9 0.9" stroke="#f1f7bc" fill="none" stroke-width="1.7" stroke-linejoin="miter"/></g></svg>
<svg style="position:absolute;left:980.50px;top:365.70px;width:13.00px;height:13.00px;" viewBox="-6.50 -6.50 13.00 13.00"><defs><linearGradient id="g198" x1="0" y1="0" x2="0" y2="1"><stop offset="0" stop-color="#d3e86a"/><stop offset="0.45" stop-color="#b7d433"/><stop offset="1" stop-color="#b7d433"/></linearGradient></defs><circle cx="0" cy="0.43" r="5.50" fill="#8ca51f"/><circle cx="0" cy="-0.34" r="5.16" fill="url(#g198)"/><g transform="scale(0.965)"><path d="M-1.9 -1.3 L0 1.1 L1.9 -1.3" stroke="#f1f7bc" fill="none" stroke-width="1.7" stroke-linejoin="miter"/></g></svg>
<div style="position:absolute;left:17.50px;top:392.85px;width:983.80px;height:1.00px;background:#dedede;"></div>
<svg style="position:absolute;left:33.50px;top:382.30px;width:10.20px;height:10.20px" viewBox="-1 -1 10.20 10.20"><rect x="0.45" y="0.45" width="7.30" height="7.30" fill="#fff" stroke="#b3b1c2" stroke-width="0.9"/></svg>
<svg style="position:absolute;left:43.60px;top:380.80px;width:13.20px;height:13.20px;" viewBox="-6.60 -6.60 13.20 13.20"><defs><linearGradient id="g201" x1="0" y1="0" x2="0" y2="1"><stop offset="0" stop-color="#d3e86a"/><stop offset="0.45" stop-color="#b7d433"/><stop offset="1" stop-color="#b7d433"/></linearGradient></defs><circle cx="0" cy="0.44" r="5.60" fill="#8ca51f"/><circle cx="0" cy="-0.34" r="5.26" fill="url(#g201)"/><g transform="scale(0.982)"><path d="M-1.4 1.6 L1.8 -1.6" stroke="#f3f9cc" stroke-width="2.4" stroke-linecap="round"/><path d="M-3.3 3.5 L-2.4 1.4 L-1.2 2.6 Z" fill="#f3f9cc"/></g></svg>
<svg style="position:absolute;left:57.90px;top:380.80px;width:13.20px;height:13.20px;" viewBox="-6.60 -6.60 13.20 13.20"><defs><linearGradient id="g202" x1="0" y1="0" x2="0" y2="1"><stop offset="0" stop-color="#b4b4be"/><stop offset="0.45" stop-color="#82828e"/><stop offset="1" stop-color="#82828e"/></linearGradient></defs><circle cx="0" cy="0.44" r="5.60" fill="#686874"/><circle cx="0" cy="-0.34" r="5.26" fill="url(#g202)"/><g transform="scale(0.982)"><circle r="4" cy="-0.2" fill="#b2b2be" opacity="0.8"/><path d="M-3.1 -2.5 H3.1 M-1.2 -3.7 H1.2" stroke="#e6e6ec" stroke-width="1.4"/><path d="M-2.7 -1.3 H2.7 L2.2 3.7 H-2.2 Z" fill="#e2e2e9"/></g></svg>
<svg style="position:absolute;left:72.50px;top:380.80px;width:13.20px;height:13.20px;" viewBox="-6.60 -6.60 13.20 13.20"><defs><linearGradient id="g203" x1="0" y1="0" x2="0" y2="1"><stop offset="0" stop-color="#d3e86a"/><stop offset="0.45" stop-color="#b7d433"/><stop offset="1" stop-color="#b7d433"/></linearGradient></defs><circle cx="0" cy="0.44" r="5.60" fill="#8ca51f"/><circle cx="0" cy="-0.34" r="5.26" fill="url(#g203)"/><g transform="scale(0.982)"><circle cx="1.1" cy="-1.5" r="1.8" stroke="#ecf4a8" fill="none" stroke-width="1.45"/><path d="M-0.5 0.2 L-2.9 2.7" stroke="#ecf4a8" stroke-width="1.9" stroke-linecap="round"/></g></svg>
<div style="position:absolute;top:381.31px;line-height:12.0px;font-size:8.05px;font-weight:normal;color:#1e1e1e;font-style:normal;white-space:nowrap;left:105.00px;"><span style="display:inline-block;transform:scaleX(0.9);transform-origin:left center;-webkit-text-stroke:0.1px">Inspection and testing</span></div>
<div style="position:absolute;top:381.31px;line-height:12.0px;font-size:8.05px;font-weight:normal;color:#1e1e1e;font-style:normal;white-space:nowrap;right:589.40px;"><span style="display:inline-block;transform:scaleX(0.9);transform-origin:right center;-webkit-text-stroke:0.1px">$8,220.00</span></div>
<div style="position:absolute;top:381.31px;line-height:12.0px;font-size:8.05px;font-weight:normal;color:#1e1e1e;font-style:normal;white-space:nowrap;right:462.40px;"><span style="display:inline-block;transform:scaleX(0.9);transform-origin:right center;-webkit-text-stroke:0.1px">$10,730.00</span></div>
<svg style="position:absolute;left:578.40px;top:382.00px;width:10.80px;height:10.80px" viewBox="-1 -1 10.80 10.80"><rect x="0.45" y="0.45" width="7.90" height="7.90" fill="#e9f0f8" stroke="#9db1c8" stroke-width="0.9"/><path d="M1.94 4.40 L3.70 6.51 L7.04 1.94" fill="none" stroke="#2c5fa3" stroke-width="1.35"/></svg>
<div style="position:absolute;top:381.31px;line-height:12.0px;font-size:8.05px;font-weight:normal;color:#1e1e1e;font-style:normal;white-space:nowrap;left:606.00px;"><span style="display:inline-block;transform:scaleX(0.9);transform-origin:left center;-webkit-text-stroke:0.1px">Site 15 - PO...</span></div>
<div style="position:absolute;top:381.31px;line-height:12.0px;font-size:8.05px;font-weight:normal;color:#1e1e1e;font-style:normal;white-space:nowrap;left:662.30px;"><span style="display:inline-block;transform:scaleX(0.9);transform-origin:left center;-webkit-text-stroke:0.1px">Inspection an...</span></div>
<div style="position:absolute;top:381.31px;line-height:12.0px;font-size:8.05px;font-weight:normal;color:#1e1e1e;font-style:normal;white-space:nowrap;right:255.60px;"><span style="display:inline-block;transform:scaleX(0.9);transform-origin:right center;-webkit-text-stroke:0.1px">$10,730.00</span></div>
<div style="position:absolute;top:381.31px;line-height:12.0px;font-size:8.05px;font-weight:normal;color:#1e1e1e;font-style:normal;white-space:nowrap;right:199.50px;"><span style="display:inline-block;transform:scaleX(0.9);transform-origin:right center;-webkit-text-stroke:0.1px">$0.00</span></div>
<div style="position:absolute;top:381.31px;line-height:12.0px;font-size:8.05px;font-weight:normal;color:#1e1e1e;font-style:normal;white-space:nowrap;right:164.40px;"><span style="display:inline-block;transform:scaleX(0.9);transform-origin:right center;-webkit-text-stroke:0.1px">2</span></div>
<div style="position:absolute;top:381.31px;line-height:12.0px;font-size:8.05px;font-weight:normal;color:#1e1e1e;font-style:normal;white-space:nowrap;right:129.40px;"><span style="display:inline-block;transform:scaleX(0.9);transform-origin:right center;-webkit-text-stroke:0.1px">6</span></div>
<div style="position:absolute;top:381.31px;line-height:12.0px;font-size:8.05px;font-weight:normal;color:#1e1e1e;font-style:normal;white-space:nowrap;left:901.00px;"><span style="display:inline-block;transform:scaleX(0.9);transform-origin:left center;-webkit-text-stroke:0.1px">25030</span></div>
<svg style="position:absolute;left:956.90px;top:379.40px;width:13.00px;height:13.00px;" viewBox="-6.50 -6.50 13.00 13.00"><defs><linearGradient id="g215" x1="0" y1="0" x2="0" y2="1"><stop offset="0" stop-color="#d3e86a"/><stop offset="0.45" stop-color="#b7d433"/><stop offset="1" stop-color="#b7d433"/></linearGradient></defs><circle cx="0" cy="0.43" r="5.50" fill="#8ca51f"/><circle cx="0" cy="-0.34" r="5.16" fill="url(#g215)"/><g transform="scale(0.965)"><path d="M-1.9 0.9 L0 -1.5 L1.9 0.9" stroke="#f1f7bc" fill="none" stroke-width="1.7" stroke-linejoin="miter"/></g></svg>
<svg style="position:absolute;left:980.50px;top:379.40px;width:13.00px;height:13.00px;" viewBox="-6.50 -6.50 13.00 13.00"><defs><linearGradient id="g216" x1="0" y1="0" x2="0" y2="1"><stop offset="0" stop-color="#d3e86a"/><stop offset="0.45" stop-color="#b7d433"/><stop offset="1" stop-color="#b7d433"/></linearGradient></defs><circle cx="0" cy="0.43" r="5.50" fill="#8ca51f"/><circle cx="0" cy="-0.34" r="5.16" fill="url(#g216)"/><g transform="scale(0.965)"><path d="M-1.9 -1.3 L0 1.1 L1.9 -1.3" stroke="#f1f7bc" fill="none" stroke-width="1.7" stroke-linejoin="miter"/></g></svg>
<div style="position:absolute;left:17.50px;top:406.55px;width:983.80px;height:1.00px;background:#dedede;"></div>
<svg style="position:absolute;left:33.50px;top:396.00px;width:10.20px;height:10.20px" viewBox="-1 -1 10.20 10.20"><rect x="0.45" y="0.45" width="7.30" height="7.30" fill="#fff" stroke="#b3b1c2" stroke-width="0.9"/></svg>
<svg style="position:absolute;left:43.60px;top:394.50px;width:13.20px;height:13.20px;" viewBox="-6.60 -6.60 13.20 13.20"><defs><linearGradient id="g219" x1="0" y1="0" x2="0" y2="1"><stop offset="0" stop-color="#d3e86a"/><stop offset="0.45" stop-color="#b7d433"/><stop offset="1" stop-color="#b7d433"/></linearGradient></defs><circle cx="0" cy="0.44" r="5.60" fill="#8ca51f"/><circle cx="0" cy="-0.34" r="5.26" fill="url(#g219)"/><g transform="scale(0.982)"><path d="M-1.4 1.6 L1.8 -1.6" stroke="#f3f9cc" stroke-width="2.4" stroke-linecap="round"/><path d="M-3.3 3.5 L-2.4 1.4 L-1.2 2.6 Z" fill="#f3f9cc"/></g></svg>
<svg style="position:absolute;left:57.90px;top:394.50px;width:13.20px;height:13.20px;" viewBox="-6.60 -6.60 13.20 13.20"><defs><linearGradient id="g220" x1="0" y1="0" x2="0" y2="1"><stop offset="0" stop-color="#b4b4be"/><stop offset="0.45" stop-color="#82828e"/><stop offset="1" stop-color="#82828e"/></linearGradient></defs><circle cx="0" cy="0.44" r="5.60" fill="#686874"/><circle cx="0" cy="-0.34" r="5.26" fill="url(#g220)"/><g transform="scale(0.982)"><circle r="4" cy="-0.2" fill="#b2b2be" opacity="0.8"/><path d="M-3.1 -2.5 H3.1 M-1.2 -3.7 H1.2" stroke="#e6e6ec" stroke-width="1.4"/><path d="M-2.7 -1.3 H2.7 L2.2 3.7 H-2.2 Z" fill="#e2e2e9"/></g></svg>
<svg style="position:absolute;left:72.50px;top:394.50px;width:13.20px;height:13.20px;" viewBox="-6.60 -6.60 13.20 13.20"><defs><linearGradient id="g221" x1="0" y1="0" x2="0" y2="1"><stop offset="0" stop-color="#d3e86a"/><stop offset="0.45" stop-color="#b7d433"/><stop offset="1" stop-color="#b7d433"/></linearGradient></defs><circle cx="0" cy="0.44" r="5.60" fill="#8ca51f"/><circle cx="0" cy="-0.34" r="5.26" fill="url(#g221)"/><g transform="scale(0.982)"><circle cx="1.1" cy="-1.5" r="1.8" stroke="#ecf4a8" fill="none" stroke-width="1.45"/><path d="M-0.5 0.2 L-2.9 2.7" stroke="#ecf4a8" stroke-width="1.9" stroke-linecap="round"/></g></svg>
<div style="position:absolute;top:395.31px;line-height:12.0px;font-size:8.05px;font-weight:normal;color:#1e1e1e;font-style:normal;white-space:nowrap;left:105.00px;"><span style="display:inline-block;transform:scaleX(0.9);transform-origin:left center;-webkit-text-stroke:0.1px">Reporting</span></div>
<div style="position:absolute;top:395.31px;line-height:12.0px;font-size:8.05px;font-weight:normal;color:#1e1e1e;font-style:normal;white-space:nowrap;right:589.40px;"><span style="display:inline-block;transform:scaleX(0.9);transform-origin:right center;-webkit-text-stroke:0.1px">$8,760.00</span></div>
<div style="position:absolute;top:395.31px;line-height:12.0px;font-size:8.05px;font-weight:normal;color:#1e1e1e;font-style:normal;white-space:nowrap;right:462.40px;"><span style="display:inline-block;transform:scaleX(0.9);transform-origin:right center;-webkit-text-stroke:0.1px">$6,600.00</span></div>
<svg style="position:absolute;left:578.40px;top:395.70px;width:10.80px;height:10.80px" viewBox="-1 -1 10.80 10.80"><rect x="0.45" y="0.45" width="7.90" height="7.90" fill="#e9f0f8" stroke="#9db1c8" stroke-width="0.9"/><path d="M1.94 4.40 L3.70 6.51 L7.04 1.94" fill="none" stroke="#2c5fa3" stroke-width="1.35"/></svg>
<div style="position:absolute;top:395.31px;line-height:12.0px;font-size:8.05px;font-weight:normal;color:#1e1e1e;font-style:normal;white-space:nowrap;left:606.00px;"><span style="display:inline-block;transform:scaleX(0.9);transform-origin:left center;-webkit-text-stroke:0.1px">Site 15 - PO...</span></div>
<div style="position:absolute;top:395.31px;line-height:12.0px;font-size:8.05px;font-weight:normal;color:#1e1e1e;font-style:normal;white-space:nowrap;left:662.30px;"><span style="display:inline-block;transform:scaleX(0.9);transform-origin:left center;-webkit-text-stroke:0.1px">Reporting</span></div>
<div style="position:absolute;top:395.31px;line-height:12.0px;font-size:8.05px;font-weight:normal;color:#1e1e1e;font-style:normal;white-space:nowrap;right:255.60px;"><span style="display:inline-block;transform:scaleX(0.9);transform-origin:right center;-webkit-text-stroke:0.1px">$6,600.00</span></div>
<div style="position:absolute;top:395.31px;line-height:12.0px;font-size:8.05px;font-weight:normal;color:#1e1e1e;font-style:normal;white-space:nowrap;right:199.50px;"><span style="display:inline-block;transform:scaleX(0.9);transform-origin:right center;-webkit-text-stroke:0.1px">$0.00</span></div>
<div style="position:absolute;top:395.31px;line-height:12.0px;font-size:8.05px;font-weight:normal;color:#1e1e1e;font-style:normal;white-space:nowrap;right:164.40px;"><span style="display:inline-block;transform:scaleX(0.9);transform-origin:right center;-webkit-text-stroke:0.1px">2</span></div>
<div style="position:absolute;top:395.31px;line-height:12.0px;font-size:8.05px;font-weight:normal;color:#1e1e1e;font-style:normal;white-space:nowrap;right:129.40px;"><span style="display:inline-block;transform:scaleX(0.9);transform-origin:right center;-webkit-text-stroke:0.1px">7</span></div>
<div style="position:absolute;top:395.31px;line-height:12.0px;font-size:8.05px;font-weight:normal;color:#1e1e1e;font-style:normal;white-space:nowrap;left:901.00px;"><span style="display:inline-block;transform:scaleX(0.9);transform-origin:left center;-webkit-text-stroke:0.1px">25030</span></div>
<svg style="position:absolute;left:956.90px;top:393.10px;width:13.00px;height:13.00px;" viewBox="-6.50 -6.50 13.00 13.00"><defs><linearGradient id="g233" x1="0" y1="0" x2="0" y2="1"><stop offset="0" stop-color="#d3e86a"/><stop offset="0.45" stop-color="#b7d433"/><stop offset="1" stop-color="#b7d433"/></linearGradient></defs><circle cx="0" cy="0.43" r="5.50" fill="#8ca51f"/><circle cx="0" cy="-0.34" r="5.16" fill="url(#g233)"/><g transform="scale(0.965)"><path d="M-1.9 0.9 L0 -1.5 L1.9 0.9" stroke="#f1f7bc" fill="none" stroke-width="1.7" stroke-linejoin="miter"/></g></svg>
<svg style="position:absolute;left:980.50px;top:393.10px;width:13.00px;height:13.00px;" viewBox="-6.50 -6.50 13.00 13.00"><defs><linearGradient id="g234" x1="0" y1="0" x2="0" y2="1"><stop offset="0" stop-color="#d3e86a"/><stop offset="0.45" stop-color="#b7d433"/><stop offset="1" stop-color="#b7d433"/></linearGradient></defs><circle cx="0" cy="0.43" r="5.50" fill="#8ca51f"/><circle cx="0" cy="-0.34" r="5.16" fill="url(#g234)"/><g transform="scale(0.965)"><path d="M-1.9 -1.3 L0 1.1 L1.9 -1.3" stroke="#f1f7bc" fill="none" stroke-width="1.7" stroke-linejoin="miter"/></g></svg>
<div style="position:absolute;left:17.50px;top:420.25px;width:983.80px;height:1.00px;background:#dedede;"></div>
<svg style="position:absolute;left:33.50px;top:409.70px;width:10.20px;height:10.20px" viewBox="-1 -1 10.20 10.20"><rect x="0.45" y="0.45" width="7.30" height="7.30" fill="#fff" stroke="#b3b1c2" stroke-width="0.9"/></svg>
<svg style="position:absolute;left:43.60px;top:408.20px;width:13.20px;height:13.20px;" viewBox="-6.60 -6.60 13.20 13.20"><defs><linearGradient id="g237" x1="0" y1="0" x2="0" y2="1"><stop offset="0" stop-color="#d3e86a"/><stop offset="0.45" stop-color="#b7d433"/><stop offset="1" stop-color="#b7d433"/></linearGradient></defs><circle cx="0" cy="0.44" r="5.60" fill="#8ca51f"/><circle cx="0" cy="-0.34" r="5.26" fill="url(#g237)"/><g transform="scale(0.982)"><path d="M-1.4 1.6 L1.8 -1.6" stroke="#f3f9cc" stroke-width="2.4" stroke-linecap="round"/><path d="M-3.3 3.5 L-2.4 1.4 L-1.2 2.6 Z" fill="#f3f9cc"/></g></svg>
<svg style="position:absolute;left:57.90px;top:408.20px;width:13.20px;height:13.20px;" viewBox="-6.60 -6.60 13.20 13.20"><defs><linearGradient id="g238" x1="0" y1="0" x2="0" y2="1"><stop offset="0" stop-color="#b4b4be"/><stop offset="0.45" stop-color="#82828e"/><stop offset="1" stop-color="#82828e"/></linearGradient></defs><circle cx="0" cy="0.44" r="5.60" fill="#686874"/><circle cx="0" cy="-0.34" r="5.26" fill="url(#g238)"/><g transform="scale(0.982)"><circle r="4" cy="-0.2" fill="#b2b2be" opacity="0.8"/><path d="M-3.1 -2.5 H3.1 M-1.2 -3.7 H1.2" stroke="#e6e6ec" stroke-width="1.4"/><path d="M-2.7 -1.3 H2.7 L2.2 3.7 H-2.2 Z" fill="#e2e2e9"/></g></svg>
<svg style="position:absolute;left:72.50px;top:408.20px;width:13.20px;height:13.20px;" viewBox="-6.60 -6.60 13.20 13.20"><defs><linearGradient id="g239" x1="0" y1="0" x2="0" y2="1"><stop offset="0" stop-color="#d3e86a"/><stop offset="0.45" stop-color="#b7d433"/><stop offset="1" stop-color="#b7d433"/></linearGradient></defs><circle cx="0" cy="0.44" r="5.60" fill="#8ca51f"/><circle cx="0" cy="-0.34" r="5.26" fill="url(#g239)"/><g transform="scale(0.982)"><circle cx="1.1" cy="-1.5" r="1.8" stroke="#ecf4a8" fill="none" stroke-width="1.45"/><path d="M-0.5 0.2 L-2.9 2.7" stroke="#ecf4a8" stroke-width="1.9" stroke-linecap="round"/></g></svg>
<div style="position:absolute;top:409.31px;line-height:12.0px;font-size:8.05px;font-weight:normal;color:#1e1e1e;font-style:normal;white-space:nowrap;left:105.00px;"><span style="display:inline-block;transform:scaleX(0.9);transform-origin:left center;-webkit-text-stroke:0.1px">Disbursements</span></div>
<svg style="position:absolute;left:578.40px;top:409.40px;width:10.80px;height:10.80px" viewBox="-1 -1 10.80 10.80"><rect x="0.45" y="0.45" width="7.90" height="7.90" fill="#e9f0f8" stroke="#9db1c8" stroke-width="0.9"/><path d="M1.94 4.40 L3.70 6.51 L7.04 1.94" fill="none" stroke="#2c5fa3" stroke-width="1.35"/></svg>
<div style="position:absolute;top:409.31px;line-height:12.0px;font-size:8.05px;font-weight:normal;color:#1e1e1e;font-style:normal;white-space:nowrap;right:255.60px;"><span style="display:inline-block;transform:scaleX(0.9);transform-origin:right center;-webkit-text-stroke:0.1px">$0.00</span></div>
<div style="position:absolute;top:409.31px;line-height:12.0px;font-size:8.05px;font-weight:normal;color:#1e1e1e;font-style:normal;white-space:nowrap;right:199.50px;"><span style="display:inline-block;transform:scaleX(0.9);transform-origin:right center;-webkit-text-stroke:0.1px">$0.00</span></div>
<div style="position:absolute;top:409.31px;line-height:12.0px;font-size:8.05px;font-weight:normal;color:#1e1e1e;font-style:normal;white-space:nowrap;right:164.40px;"><span style="display:inline-block;transform:scaleX(0.9);transform-origin:right center;-webkit-text-stroke:0.1px">7</span></div>
<div style="position:absolute;top:409.31px;line-height:12.0px;font-size:8.05px;font-weight:normal;color:#1e1e1e;font-style:normal;white-space:nowrap;right:129.40px;"><span style="display:inline-block;transform:scaleX(0.9);transform-origin:right center;-webkit-text-stroke:0.1px">8</span></div>
<div style="position:absolute;top:409.31px;line-height:12.0px;font-size:8.05px;font-weight:normal;color:#1e1e1e;font-style:normal;white-space:nowrap;left:901.00px;"><span style="display:inline-block;transform:scaleX(0.9);transform-origin:left center;-webkit-text-stroke:0.1px">25030</span></div>
<svg style="position:absolute;left:956.90px;top:406.80px;width:13.00px;height:13.00px;" viewBox="-6.50 -6.50 13.00 13.00"><defs><linearGradient id="g247" x1="0" y1="0" x2="0" y2="1"><stop offset="0" stop-color="#d3e86a"/><stop offset="0.45" stop-color="#b7d433"/><stop offset="1" stop-color="#b7d433"/></linearGradient></defs><circle cx="0" cy="0.43" r="5.50" fill="#8ca51f"/><circle cx="0" cy="-0.34" r="5.16" fill="url(#g247)"/><g transform="scale(0.965)"><path d="M-1.9 0.9 L0 -1.5 L1.9 0.9" stroke="#f1f7bc" fill="none" stroke-width="1.7" stroke-linejoin="miter"/></g></svg>
<svg style="position:absolute;left:980.50px;top:406.80px;width:13.00px;height:13.00px;" viewBox="-6.50 -6.50 13.00 13.00"><defs><linearGradient id="g248" x1="0" y1="0" x2="0" y2="1"><stop offset="0" stop-color="#d3e86a"/><stop offset="0.45" stop-color="#b7d433"/><stop offset="1" stop-color="#b7d433"/></linearGradient></defs><circle cx="0" cy="0.43" r="5.50" fill="#8ca51f"/><circle cx="0" cy="-0.34" r="5.16" fill="url(#g248)"/><g transform="scale(0.965)"><path d="M-1.9 -1.3 L0 1.1 L1.9 -1.3" stroke="#f1f7bc" fill="none" stroke-width="1.7" stroke-linejoin="miter"/></g></svg>
<div style="position:absolute;left:17.50px;top:433.95px;width:983.80px;height:1.00px;background:#dedede;"></div>
<svg style="position:absolute;left:33.50px;top:423.40px;width:10.20px;height:10.20px" viewBox="-1 -1 10.20 10.20"><rect x="0.45" y="0.45" width="7.30" height="7.30" fill="#fff" stroke="#b3b1c2" stroke-width="0.9"/></svg>
<svg style="position:absolute;left:43.60px;top:421.90px;width:13.20px;height:13.20px;" viewBox="-6.60 -6.60 13.20 13.20"><defs><linearGradient id="g251" x1="0" y1="0" x2="0" y2="1"><stop offset="0" stop-color="#d3e86a"/><stop offset="0.45" stop-color="#b7d433"/><stop offset="1" stop-color="#b7d433"/></linearGradient></defs><circle cx="0" cy="0.44" r="5.60" fill="#8ca51f"/><circle cx="0" cy="-0.34" r="5.26" fill="url(#g251)"/><g transform="scale(0.982)"><path d="M-1.4 1.6 L1.8 -1.6" stroke="#f3f9cc" stroke-width="2.4" stroke-linecap="round"/><path d="M-3.3 3.5 L-2.4 1.4 L-1.2 2.6 Z" fill="#f3f9cc"/></g></svg>
<svg style="position:absolute;left:57.90px;top:421.90px;width:13.20px;height:13.20px;" viewBox="-6.60 -6.60 13.20 13.20"><defs><linearGradient id="g252" x1="0" y1="0" x2="0" y2="1"><stop offset="0" stop-color="#b4b4be"/><stop offset="0.45" stop-color="#82828e"/><stop offset="1" stop-color="#82828e"/></linearGradient></defs><circle cx="0" cy="0.44" r="5.60" fill="#686874"/><circle cx="0" cy="-0.34" r="5.26" fill="url(#g252)"/><g transform="scale(0.982)"><circle r="4" cy="-0.2" fill="#b2b2be" opacity="0.8"/><path d="M-3.1 -2.5 H3.1 M-1.2 -3.7 H1.2" stroke="#e6e6ec" stroke-width="1.4"/><path d="M-2.7 -1.3 H2.7 L2.2 3.7 H-2.2 Z" fill="#e2e2e9"/></g></svg>
<svg style="position:absolute;left:72.50px;top:421.90px;width:13.20px;height:13.20px;" viewBox="-6.60 -6.60 13.20 13.20"><defs><linearGradient id="g253" x1="0" y1="0" x2="0" y2="1"><stop offset="0" stop-color="#d3e86a"/><stop offset="0.45" stop-color="#b7d433"/><stop offset="1" stop-color="#b7d433"/></linearGradient></defs><circle cx="0" cy="0.44" r="5.60" fill="#8ca51f"/><circle cx="0" cy="-0.34" r="5.26" fill="url(#g253)"/><g transform="scale(0.982)"><circle cx="1.1" cy="-1.5" r="1.8" stroke="#ecf4a8" fill="none" stroke-width="1.45"/><path d="M-0.5 0.2 L-2.9 2.7" stroke="#ecf4a8" stroke-width="1.9" stroke-linecap="round"/></g></svg>
<div style="position:absolute;top:422.31px;line-height:12.0px;font-size:8.05px;font-weight:normal;color:#1e1e1e;font-style:normal;white-space:nowrap;left:105.00px;"><span style="display:inline-block;transform:scaleX(0.9);transform-origin:left center;-webkit-text-stroke:0.1px">Accomodation</span></div>
<div style="position:absolute;top:422.31px;line-height:12.0px;font-size:8.05px;font-weight:normal;color:#1e1e1e;font-style:normal;white-space:nowrap;right:589.40px;"><span style="display:inline-block;transform:scaleX(0.9);transform-origin:right center;-webkit-text-stroke:0.1px">$418.00</span></div>
<div style="position:absolute;top:422.31px;line-height:12.0px;font-size:8.05px;font-weight:normal;color:#1e1e1e;font-style:normal;white-space:nowrap;right:462.40px;"><span style="display:inline-block;transform:scaleX(0.9);transform-origin:right center;-webkit-text-stroke:0.1px">$418.00</span></div>
<svg style="position:absolute;left:578.40px;top:423.10px;width:10.80px;height:10.80px" viewBox="-1 -1 10.80 10.80"><rect x="0.45" y="0.45" width="7.90" height="7.90" fill="#e9f0f8" stroke="#9db1c8" stroke-width="0.9"/><path d="M1.94 4.40 L3.70 6.51 L7.04 1.94" fill="none" stroke="#2c5fa3" stroke-width="1.35"/></svg>
<div style="position:absolute;top:422.31px;line-height:12.0px;font-size:8.05px;font-weight:normal;color:#1e1e1e;font-style:normal;white-space:nowrap;right:255.60px;"><span style="display:inline-block;transform:scaleX(0.9);transform-origin:right center;-webkit-text-stroke:0.1px">$0.00</span></div>
<div style="position:absolute;top:422.31px;line-height:12.0px;font-size:8.05px;font-weight:normal;color:#1e1e1e;font-style:normal;white-space:nowrap;right:199.50px;"><span style="display:inline-block;transform:scaleX(0.9);transform-origin:right center;-webkit-text-stroke:0.1px">$0.00</span></div>
<div style="position:absolute;top:422.31px;line-height:12.0px;font-size:8.05px;font-weight:normal;color:#1e1e1e;font-style:normal;white-space:nowrap;right:164.40px;"><span style="display:inline-block;transform:scaleX(0.9);transform-origin:right center;-webkit-text-stroke:0.1px">7</span></div>
<div style="position:absolute;top:422.31px;line-height:12.0px;font-size:8.05px;font-weight:normal;color:#1e1e1e;font-style:normal;white-space:nowrap;right:129.40px;"><span style="display:inline-block;transform:scaleX(0.9);transform-origin:right center;-webkit-text-stroke:0.1px">9</span></div>
<div style="position:absolute;top:422.31px;line-height:12.0px;font-size:8.05px;font-weight:normal;color:#1e1e1e;font-style:normal;white-space:nowrap;left:901.00px;"><span style="display:inline-block;transform:scaleX(0.9);transform-origin:left center;-webkit-text-stroke:0.1px">25030</span></div>
<svg style="position:absolute;left:956.90px;top:420.50px;width:13.00px;height:13.00px;" viewBox="-6.50 -6.50 13.00 13.00"><defs><linearGradient id="g263" x1="0" y1="0" x2="0" y2="1"><stop offset="0" stop-color="#d3e86a"/><stop offset="0.45" stop-color="#b7d433"/><stop offset="1" stop-color="#b7d433"/></linearGradient></defs><circle cx="0" cy="0.43" r="5.50" fill="#8ca51f"/><circle cx="0" cy="-0.34" r="5.16" fill="url(#g263)"/><g transform="scale(0.965)"><path d="M-1.9 0.9 L0 -1.5 L1.9 0.9" stroke="#f1f7bc" fill="none" stroke-width="1.7" stroke-linejoin="miter"/></g></svg>
<svg style="position:absolute;left:980.50px;top:420.50px;width:13.00px;height:13.00px;" viewBox="-6.50 -6.50 13.00 13.00"><defs><linearGradient id="g264" x1="0" y1="0" x2="0" y2="1"><stop offset="0" stop-color="#d3e86a"/><stop offset="0.45" stop-color="#b7d433"/><stop offset="1" stop-color="#b7d433"/></linearGradient></defs><circle cx="0" cy="0.43" r="5.50" fill="#8ca51f"/><circle cx="0" cy="-0.34" r="5.16" fill="url(#g264)"/><g transform="scale(0.965)"><path d="M-1.9 -1.3 L0 1.1 L1.9 -1.3" stroke="#f1f7bc" fill="none" stroke-width="1.7" stroke-linejoin="miter"/></g></svg>
<div style="position:absolute;left:17.50px;top:447.65px;width:983.80px;height:1.00px;background:#dedede;"></div>
<svg style="position:absolute;left:33.50px;top:437.10px;width:10.20px;height:10.20px" viewBox="-1 -1 10.20 10.20"><rect x="0.45" y="0.45" width="7.30" height="7.30" fill="#fff" stroke="#b3b1c2" stroke-width="0.9"/></svg>
<svg style="position:absolute;left:43.60px;top:435.60px;width:13.20px;height:13.20px;" viewBox="-6.60 -6.60 13.20 13.20"><defs><linearGradient id="g267" x1="0" y1="0" x2="0" y2="1"><stop offset="0" stop-color="#d3e86a"/><stop offset="0.45" stop-color="#b7d433"/><stop offset="1" stop-color="#b7d433"/></linearGradient></defs><circle cx="0" cy="0.44" r="5.60" fill="#8ca51f"/><circle cx="0" cy="-0.34" r="5.26" fill="url(#g267)"/><g transform="scale(0.982)"><path d="M-1.4 1.6 L1.8 -1.6" stroke="#f3f9cc" stroke-width="2.4" stroke-linecap="round"/><path d="M-3.3 3.5 L-2.4 1.4 L-1.2 2.6 Z" fill="#f3f9cc"/></g></svg>
<svg style="position:absolute;left:57.90px;top:435.60px;width:13.20px;height:13.20px;" viewBox="-6.60 -6.60 13.20 13.20"><defs><linearGradient id="g268" x1="0" y1="0" x2="0" y2="1"><stop offset="0" stop-color="#b4b4be"/><stop offset="0.45" stop-color="#82828e"/><stop offset="1" stop-color="#82828e"/></linearGradient></defs><circle cx="0" cy="0.44" r="5.60" fill="#686874"/><circle cx="0" cy="-0.34" r="5.26" fill="url(#g268)"/><g transform="scale(0.982)"><circle r="4" cy="-0.2" fill="#b2b2be" opacity="0.8"/><path d="M-3.1 -2.5 H3.1 M-1.2 -3.7 H1.2" stroke="#e6e6ec" stroke-width="1.4"/><path d="M-2.7 -1.3 H2.7 L2.2 3.7 H-2.2 Z" fill="#e2e2e9"/></g></svg>
<svg style="position:absolute;left:72.50px;top:435.60px;width:13.20px;height:13.20px;" viewBox="-6.60 -6.60 13.20 13.20"><defs><linearGradient id="g269" x1="0" y1="0" x2="0" y2="1"><stop offset="0" stop-color="#d3e86a"/><stop offset="0.45" stop-color="#b7d433"/><stop offset="1" stop-color="#b7d433"/></linearGradient></defs><circle cx="0" cy="0.44" r="5.60" fill="#8ca51f"/><circle cx="0" cy="-0.34" r="5.26" fill="url(#g269)"/><g transform="scale(0.982)"><circle cx="1.1" cy="-1.5" r="1.8" stroke="#ecf4a8" fill="none" stroke-width="1.45"/><path d="M-0.5 0.2 L-2.9 2.7" stroke="#ecf4a8" stroke-width="1.9" stroke-linecap="round"/></g></svg>
<div style="position:absolute;top:436.31px;line-height:12.0px;font-size:8.05px;font-weight:normal;color:#1e1e1e;font-style:normal;white-space:nowrap;left:105.00px;"><span style="display:inline-block;transform:scaleX(0.9);transform-origin:left center;-webkit-text-stroke:0.1px">Consultants and SubContractors</span></div>
<div style="position:absolute;top:436.31px;line-height:12.0px;font-size:8.05px;font-weight:normal;color:#1e1e1e;font-style:normal;white-space:nowrap;right:589.40px;"><span style="display:inline-block;transform:scaleX(0.9);transform-origin:right center;-webkit-text-stroke:0.1px">$5,280.00</span></div>
<div style="position:absolute;top:436.31px;line-height:12.0px;font-size:8.05px;font-weight:normal;color:#1e1e1e;font-style:normal;white-space:nowrap;right:462.40px;"><span style="display:inline-block;transform:scaleX(0.9);transform-origin:right center;-webkit-text-stroke:0.1px">$5,280.00</span></div>
<svg style="position:absolute;left:578.40px;top:436.80px;width:10.80px;height:10.80px" viewBox="-1 -1 10.80 10.80"><rect x="0.45" y="0.45" width="7.90" height="7.90" fill="#e9f0f8" stroke="#9db1c8" stroke-width="0.9"/><path d="M1.94 4.40 L3.70 6.51 L7.04 1.94" fill="none" stroke="#2c5fa3" stroke-width="1.35"/></svg>
<div style="position:absolute;top:436.31px;line-height:12.0px;font-size:8.05px;font-weight:normal;color:#1e1e1e;font-style:normal;white-space:nowrap;right:255.60px;"><span style="display:inline-block;transform:scaleX(0.9);transform-origin:right center;-webkit-text-stroke:0.1px">$0.00</span></div>
<div style="position:absolute;top:436.31px;line-height:12.0px;font-size:8.05px;font-weight:normal;color:#1e1e1e;font-style:normal;white-space:nowrap;right:199.50px;"><span style="display:inline-block;transform:scaleX(0.9);transform-origin:right center;-webkit-text-stroke:0.1px">$0.00</span></div>
<div style="position:absolute;top:436.31px;line-height:12.0px;font-size:8.05px;font-weight:normal;color:#1e1e1e;font-style:normal;white-space:nowrap;right:164.40px;"><span style="display:inline-block;transform:scaleX(0.9);transform-origin:right center;-webkit-text-stroke:0.1px">7</span></div>
<div style="position:absolute;top:436.31px;line-height:12.0px;font-size:8.05px;font-weight:normal;color:#1e1e1e;font-style:normal;white-space:nowrap;right:129.40px;"><span style="display:inline-block;transform:scaleX(0.9);transform-origin:right center;-webkit-text-stroke:0.1px">10</span></div>
<div style="position:absolute;top:436.31px;line-height:12.0px;font-size:8.05px;font-weight:normal;color:#1e1e1e;font-style:normal;white-space:nowrap;left:901.00px;"><span style="display:inline-block;transform:scaleX(0.9);transform-origin:left center;-webkit-text-stroke:0.1px">25030</span></div>
<svg style="position:absolute;left:956.90px;top:434.20px;width:13.00px;height:13.00px;" viewBox="-6.50 -6.50 13.00 13.00"><defs><linearGradient id="g279" x1="0" y1="0" x2="0" y2="1"><stop offset="0" stop-color="#d3e86a"/><stop offset="0.45" stop-color="#b7d433"/><stop offset="1" stop-color="#b7d433"/></linearGradient></defs><circle cx="0" cy="0.43" r="5.50" fill="#8ca51f"/><circle cx="0" cy="-0.34" r="5.16" fill="url(#g279)"/><g transform="scale(0.965)"><path d="M-1.9 0.9 L0 -1.5 L1.9 0.9" stroke="#f1f7bc" fill="none" stroke-width="1.7" stroke-linejoin="miter"/></g></svg>
<svg style="position:absolute;left:980.50px;top:434.20px;width:13.00px;height:13.00px;" viewBox="-6.50 -6.50 13.00 13.00"><defs><linearGradient id="g280" x1="0" y1="0" x2="0" y2="1"><stop offset="0" stop-color="#d3e86a"/><stop offset="0.45" stop-color="#b7d433"/><stop offset="1" stop-color="#b7d433"/></linearGradient></defs><circle cx="0" cy="0.43" r="5.50" fill="#8ca51f"/><circle cx="0" cy="-0.34" r="5.16" fill="url(#g280)"/><g transform="scale(0.965)"><path d="M-1.9 -1.3 L0 1.1 L1.9 -1.3" stroke="#f1f7bc" fill="none" stroke-width="1.7" stroke-linejoin="miter"/></g></svg>
<div style="position:absolute;left:17.50px;top:461.35px;width:983.80px;height:1.00px;background:#dedede;"></div>
<svg style="position:absolute;left:33.50px;top:450.80px;width:10.20px;height:10.20px" viewBox="-1 -1 10.20 10.20"><rect x="0.45" y="0.45" width="7.30" height="7.30" fill="#fff" stroke="#b3b1c2" stroke-width="0.9"/></svg>
<svg style="position:absolute;left:43.60px;top:449.30px;width:13.20px;height:13.20px;" viewBox="-6.60 -6.60 13.20 13.20"><defs><linearGradient id="g283" x1="0" y1="0" x2="0" y2="1"><stop offset="0" stop-color="#d3e86a"/><stop offset="0.45" stop-color="#b7d433"/><stop offset="1" stop-color="#b7d433"/></linearGradient></defs><circle cx="0" cy="0.44" r="5.60" fill="#8ca51f"/><circle cx="0" cy="-0.34" r="5.26" fill="url(#g283)"/><g transform="scale(0.982)"><path d="M-1.4 1.6 L1.8 -1.6" stroke="#f3f9cc" stroke-width="2.4" stroke-linecap="round"/><path d="M-3.3 3.5 L-2.4 1.4 L-1.2 2.6 Z" fill="#f3f9cc"/></g></svg>
<svg style="position:absolute;left:57.90px;top:449.30px;width:13.20px;height:13.20px;" viewBox="-6.60 -6.60 13.20 13.20"><defs><linearGradient id="g284" x1="0" y1="0" x2="0" y2="1"><stop offset="0" stop-color="#b4b4be"/><stop offset="0.45" stop-color="#82828e"/><stop offset="1" stop-color="#82828e"/></linearGradient></defs><circle cx="0" cy="0.44" r="5.60" fill="#686874"/><circle cx="0" cy="-0.34" r="5.26" fill="url(#g284)"/><g transform="scale(0.982)"><circle r="4" cy="-0.2" fill="#b2b2be" opacity="0.8"/><path d="M-3.1 -2.5 H3.1 M-1.2 -3.7 H1.2" stroke="#e6e6ec" stroke-width="1.4"/><path d="M-2.7 -1.3 H2.7 L2.2 3.7 H-2.2 Z" fill="#e2e2e9"/></g></svg>
<svg style="position:absolute;left:72.50px;top:449.30px;width:13.20px;height:13.20px;" viewBox="-6.60 -6.60 13.20 13.20"><defs><linearGradient id="g285" x1="0" y1="0" x2="0" y2="1"><stop offset="0" stop-color="#d3e86a"/><stop offset="0.45" stop-color="#b7d433"/><stop offset="1" stop-color="#b7d433"/></linearGradient></defs><circle cx="0" cy="0.44" r="5.60" fill="#8ca51f"/><circle cx="0" cy="-0.34" r="5.26" fill="url(#g285)"/><g transform="scale(0.982)"><circle cx="1.1" cy="-1.5" r="1.8" stroke="#ecf4a8" fill="none" stroke-width="1.45"/><path d="M-0.5 0.2 L-2.9 2.7" stroke="#ecf4a8" stroke-width="1.9" stroke-linecap="round"/></g></svg>
<div style="position:absolute;top:450.31px;line-height:12.0px;font-size:8.05px;font-weight:normal;color:#1e1e1e;font-style:normal;white-space:nowrap;left:105.00px;"><span style="display:inline-block;transform:scaleX(0.9);transform-origin:left center;-webkit-text-stroke:0.1px">Other</span></div>
<div style="position:absolute;top:450.31px;line-height:12.0px;font-size:8.05px;font-weight:normal;color:#1e1e1e;font-style:normal;white-space:nowrap;right:589.40px;"><span style="display:inline-block;transform:scaleX(0.9);transform-origin:right center;-webkit-text-stroke:0.1px">$128.70</span></div>
<div style="position:absolute;top:450.31px;line-height:12.0px;font-size:8.05px;font-weight:normal;color:#1e1e1e;font-style:normal;white-space:nowrap;right:462.40px;"><span style="display:inline-block;transform:scaleX(0.9);transform-origin:right center;-webkit-text-stroke:0.1px">$128.70</span></div>
<svg style="position:absolute;left:578.40px;top:450.50px;width:10.80px;height:10.80px" viewBox="-1 -1 10.80 10.80"><rect x="0.45" y="0.45" width="7.90" height="7.90" fill="#e9f0f8" stroke="#9db1c8" stroke-width="0.9"/><path d="M1.94 4.40 L3.70 6.51 L7.04 1.94" fill="none" stroke="#2c5fa3" stroke-width="1.35"/></svg>
<div style="position:absolute;top:450.31px;line-height:12.0px;font-size:8.05px;font-weight:normal;color:#1e1e1e;font-style:normal;white-space:nowrap;right:255.60px;"><span style="display:inline-block;transform:scaleX(0.9);transform-origin:right center;-webkit-text-stroke:0.1px">$0.00</span></div>
<div style="position:absolute;top:450.31px;line-height:12.0px;font-size:8.05px;font-weight:normal;color:#1e1e1e;font-style:normal;white-space:nowrap;right:199.50px;"><span style="display:inline-block;transform:scaleX(0.9);transform-origin:right center;-webkit-text-stroke:0.1px">$0.00</span></div>
<div style="position:absolute;top:450.31px;line-height:12.0px;font-size:8.05px;font-weight:normal;color:#1e1e1e;font-style:normal;white-space:nowrap;right:164.40px;"><span style="display:inline-block;transform:scaleX(0.9);transform-origin:right center;-webkit-text-stroke:0.1px">7</span></div>
<div style="position:absolute;top:450.31px;line-height:12.0px;font-size:8.05px;font-weight:normal;color:#1e1e1e;font-style:normal;white-space:nowrap;right:129.40px;"><span style="display:inline-block;transform:scaleX(0.9);transform-origin:right center;-webkit-text-stroke:0.1px">11</span></div>
<div style="position:absolute;top:450.31px;line-height:12.0px;font-size:8.05px;font-weight:normal;color:#1e1e1e;font-style:normal;white-space:nowrap;left:901.00px;"><span style="display:inline-block;transform:scaleX(0.9);transform-origin:left center;-webkit-text-stroke:0.1px">25030</span></div>
<svg style="position:absolute;left:956.90px;top:447.90px;width:13.00px;height:13.00px;" viewBox="-6.50 -6.50 13.00 13.00"><defs><linearGradient id="g295" x1="0" y1="0" x2="0" y2="1"><stop offset="0" stop-color="#d3e86a"/><stop offset="0.45" stop-color="#b7d433"/><stop offset="1" stop-color="#b7d433"/></linearGradient></defs><circle cx="0" cy="0.43" r="5.50" fill="#8ca51f"/><circle cx="0" cy="-0.34" r="5.16" fill="url(#g295)"/><g transform="scale(0.965)"><path d="M-1.9 0.9 L0 -1.5 L1.9 0.9" stroke="#f1f7bc" fill="none" stroke-width="1.7" stroke-linejoin="miter"/></g></svg>
<svg style="position:absolute;left:980.50px;top:447.90px;width:13.00px;height:13.00px;" viewBox="-6.50 -6.50 13.00 13.00"><defs><linearGradient id="g296" x1="0" y1="0" x2="0" y2="1"><stop offset="0" stop-color="#d3e86a"/><stop offset="0.45" stop-color="#b7d433"/><stop offset="1" stop-color="#b7d433"/></linearGradient></defs><circle cx="0" cy="0.43" r="5.50" fill="#8ca51f"/><circle cx="0" cy="-0.34" r="5.16" fill="url(#g296)"/><g transform="scale(0.965)"><path d="M-1.9 -1.3 L0 1.1 L1.9 -1.3" stroke="#f1f7bc" fill="none" stroke-width="1.7" stroke-linejoin="miter"/></g></svg>
<div style="position:absolute;left:17.50px;top:475.05px;width:983.80px;height:1.00px;background:#dedede;"></div>
<svg style="position:absolute;left:33.50px;top:464.50px;width:10.20px;height:10.20px" viewBox="-1 -1 10.20 10.20"><rect x="0.45" y="0.45" width="7.30" height="7.30" fill="#fff" stroke="#b3b1c2" stroke-width="0.9"/></svg>
<svg style="position:absolute;left:43.60px;top:463.00px;width:13.20px;height:13.20px;" viewBox="-6.60 -6.60 13.20 13.20"><defs><linearGradient id="g299" x1="0" y1="0" x2="0" y2="1"><stop offset="0" stop-color="#d3e86a"/><stop offset="0.45" stop-color="#b7d433"/><stop offset="1" stop-color="#b7d433"/></linearGradient></defs><circle cx="0" cy="0.44" r="5.60" fill="#8ca51f"/><circle cx="0" cy="-0.34" r="5.26" fill="url(#g299)"/><g transform="scale(0.982)"><path d="M-1.4 1.6 L1.8 -1.6" stroke="#f3f9cc" stroke-width="2.4" stroke-linecap="round"/><path d="M-3.3 3.5 L-2.4 1.4 L-1.2 2.6 Z" fill="#f3f9cc"/></g></svg>
<svg style="position:absolute;left:57.90px;top:463.00px;width:13.20px;height:13.20px;" viewBox="-6.60 -6.60 13.20 13.20"><defs><linearGradient id="g300" x1="0" y1="0" x2="0" y2="1"><stop offset="0" stop-color="#b4b4be"/><stop offset="0.45" stop-color="#82828e"/><stop offset="1" stop-color="#82828e"/></linearGradient></defs><circle cx="0" cy="0.44" r="5.60" fill="#686874"/><circle cx="0" cy="-0.34" r="5.26" fill="url(#g300)"/><g transform="scale(0.982)"><circle r="4" cy="-0.2" fill="#b2b2be" opacity="0.8"/><path d="M-3.1 -2.5 H3.1 M-1.2 -3.7 H1.2" stroke="#e6e6ec" stroke-width="1.4"/><path d="M-2.7 -1.3 H2.7 L2.2 3.7 H-2.2 Z" fill="#e2e2e9"/></g></svg>
<svg style="position:absolute;left:72.50px;top:463.00px;width:13.20px;height:13.20px;" viewBox="-6.60 -6.60 13.20 13.20"><defs><linearGradient id="g301" x1="0" y1="0" x2="0" y2="1"><stop offset="0" stop-color="#d3e86a"/><stop offset="0.45" stop-color="#b7d433"/><stop offset="1" stop-color="#b7d433"/></linearGradient></defs><circle cx="0" cy="0.44" r="5.60" fill="#8ca51f"/><circle cx="0" cy="-0.34" r="5.26" fill="url(#g301)"/><g transform="scale(0.982)"><circle cx="1.1" cy="-1.5" r="1.8" stroke="#ecf4a8" fill="none" stroke-width="1.45"/><path d="M-0.5 0.2 L-2.9 2.7" stroke="#ecf4a8" stroke-width="1.9" stroke-linecap="round"/></g></svg>
<div style="position:absolute;top:463.31px;line-height:12.0px;font-size:8.05px;font-weight:normal;color:#1e1e1e;font-style:normal;white-space:nowrap;left:105.00px;"><span style="display:inline-block;transform:scaleX(0.9);transform-origin:left center;-webkit-text-stroke:0.1px">Project Materials</span></div>
<div style="position:absolute;top:463.31px;line-height:12.0px;font-size:8.05px;font-weight:normal;color:#1e1e1e;font-style:normal;white-space:nowrap;right:589.40px;"><span style="display:inline-block;transform:scaleX(0.9);transform-origin:right center;-webkit-text-stroke:0.1px">$408.82</span></div>
<div style="position:absolute;top:463.31px;line-height:12.0px;font-size:8.05px;font-weight:normal;color:#1e1e1e;font-style:normal;white-space:nowrap;right:462.40px;"><span style="display:inline-block;transform:scaleX(0.9);transform-origin:right center;-webkit-text-stroke:0.1px">$408.82</span></div>
<svg style="position:absolute;left:578.40px;top:464.20px;width:10.80px;height:10.80px" viewBox="-1 -1 10.80 10.80"><rect x="0.45" y="0.45" width="7.90" height="7.90" fill="#e9f0f8" stroke="#9db1c8" stroke-width="0.9"/><path d="M1.94 4.40 L3.70 6.51 L7.04 1.94" fill="none" stroke="#2c5fa3" stroke-width="1.35"/></svg>
<div style="position:absolute;top:463.31px;line-height:12.0px;font-size:8.05px;font-weight:normal;color:#1e1e1e;font-style:normal;white-space:nowrap;right:255.60px;"><span style="display:inline-block;transform:scaleX(0.9);transform-origin:right center;-webkit-text-stroke:0.1px">$0.00</span></div>
<div style="position:absolute;top:463.31px;line-height:12.0px;font-size:8.05px;font-weight:normal;color:#1e1e1e;font-style:normal;white-space:nowrap;right:199.50px;"><span style="display:inline-block;transform:scaleX(0.9);transform-origin:right center;-webkit-text-stroke:0.1px">$0.00</span></div>
<div style="position:absolute;top:463.31px;line-height:12.0px;font-size:8.05px;font-weight:normal;color:#1e1e1e;font-style:normal;white-space:nowrap;right:164.40px;"><span style="display:inline-block;transform:scaleX(0.9);transform-origin:right center;-webkit-text-stroke:0.1px">7</span></div>
<div style="position:absolute;top:463.31px;line-height:12.0px;font-size:8.05px;font-weight:normal;color:#1e1e1e;font-style:normal;white-space:nowrap;right:129.40px;"><span style="display:inline-block;transform:scaleX(0.9);transform-origin:right center;-webkit-text-stroke:0.1px">12</span></div>
<div style="position:absolute;top:463.31px;line-height:12.0px;font-size:8.05px;font-weight:normal;color:#1e1e1e;font-style:normal;white-space:nowrap;left:901.00px;"><span style="display:inline-block;transform:scaleX(0.9);transform-origin:left center;-webkit-text-stroke:0.1px">25030</span></div>
<svg style="position:absolute;left:956.90px;top:461.60px;width:13.00px;height:13.00px;" viewBox="-6.50 -6.50 13.00 13.00"><defs><linearGradient id="g311" x1="0" y1="0" x2="0" y2="1"><stop offset="0" stop-color="#d3e86a"/><stop offset="0.45" stop-color="#b7d433"/><stop offset="1" stop-color="#b7d433"/></linearGradient></defs><circle cx="0" cy="0.43" r="5.50" fill="#8ca51f"/><circle cx="0" cy="-0.34" r="5.16" fill="url(#g311)"/><g transform="scale(0.965)"><path d="M-1.9 0.9 L0 -1.5 L1.9 0.9" stroke="#f1f7bc" fill="none" stroke-width="1.7" stroke-linejoin="miter"/></g></svg>
<svg style="position:absolute;left:980.50px;top:461.60px;width:13.00px;height:13.00px;" viewBox="-6.50 -6.50 13.00 13.00"><defs><linearGradient id="g312" x1="0" y1="0" x2="0" y2="1"><stop offset="0" stop-color="#d3e86a"/><stop offset="0.45" stop-color="#b7d433"/><stop offset="1" stop-color="#b7d433"/></linearGradient></defs><circle cx="0" cy="0.43" r="5.50" fill="#8ca51f"/><circle cx="0" cy="-0.34" r="5.16" fill="url(#g312)"/><g transform="scale(0.965)"><path d="M-1.9 -1.3 L0 1.1 L1.9 -1.3" stroke="#f1f7bc" fill="none" stroke-width="1.7" stroke-linejoin="miter"/></g></svg>
<div style="position:absolute;left:17.50px;top:488.75px;width:983.80px;height:1.00px;background:#dedede;"></div>
<div style="position:absolute;left:101.70px;top:311.00px;width:1.00px;height:165.00px;background:#dddde3;"></div>
<div style="position:absolute;left:381.00px;top:311.00px;width:1.00px;height:165.00px;background:#dddde3;"></div>
<div style="position:absolute;left:437.00px;top:311.00px;width:1.00px;height:165.00px;background:#dddde3;"></div>
<div style="position:absolute;left:472.50px;top:311.00px;width:1.00px;height:165.00px;background:#dddde3;"></div>
<div style="position:absolute;left:508.25px;top:311.00px;width:1.00px;height:165.00px;background:#dddde3;"></div>
<div style="position:absolute;left:564.00px;top:311.00px;width:1.00px;height:165.00px;background:#dddde3;"></div>
<div style="position:absolute;left:601.75px;top:311.00px;width:1.00px;height:165.00px;background:#dddde3;"></div>
<div style="position:absolute;left:658.50px;top:311.00px;width:1.00px;height:165.00px;background:#dddde3;"></div>
<div style="position:absolute;left:714.75px;top:311.00px;width:1.00px;height:165.00px;background:#dddde3;"></div>
<div style="position:absolute;left:770.50px;top:311.00px;width:1.00px;height:165.00px;background:#dddde3;"></div>
<div style="position:absolute;left:826.80px;top:311.00px;width:1.00px;height:165.00px;background:#dddde3;"></div>
<div style="position:absolute;left:862.90px;top:311.00px;width:1.00px;height:165.00px;background:#dddde3;"></div>
<div style="position:absolute;left:897.90px;top:311.00px;width:1.00px;height:165.00px;background:#dddde3;"></div>
<div style="position:absolute;left:954.20px;top:311.00px;width:1.00px;height:165.00px;background:#dddde3;"></div>
<div style="position:absolute;left:977.10px;top:311.00px;width:1.00px;height:165.00px;background:#dddde3;"></div>
<div style="position:absolute;left:1001.30px;top:288.20px;width:0.70px;height:187.80px;background:#dcdcdc;"></div>
<div style="position:absolute;top:295.31px;line-height:12.0px;font-size:8.05px;font-weight:bold;color:#fff;font-style:normal;white-space:nowrap;left:41.05px;width:400px;text-align:center;">Narration</div>
<div style="position:absolute;top:290.31px;line-height:12.0px;font-size:8.05px;font-weight:bold;color:#fff;font-style:normal;white-space:nowrap;left:208.70px;width:400px;text-align:center;">Assigned</div>
<div style="position:absolute;top:299.31px;line-height:12.0px;font-size:8.05px;font-weight:bold;color:#fff;font-style:normal;white-space:nowrap;left:208.70px;width:400px;text-align:center;">Fees</div>
<div style="position:absolute;top:295.31px;line-height:12.0px;font-size:8.05px;font-weight:bold;color:#fff;font-style:normal;white-space:nowrap;left:254.45px;width:400px;text-align:center;">Rate</div>
<div style="position:absolute;top:295.31px;line-height:12.0px;font-size:8.05px;font-weight:bold;color:#fff;font-style:normal;white-space:nowrap;left:290.07px;width:400px;text-align:center;">Units</div>
<div style="position:absolute;top:290.31px;line-height:12.0px;font-size:8.05px;font-weight:bold;color:#fff;font-style:normal;white-space:nowrap;left:335.83px;width:400px;text-align:center;">Line</div>
<div style="position:absolute;top:299.31px;line-height:12.0px;font-size:8.05px;font-weight:bold;color:#fff;font-style:normal;white-space:nowrap;left:335.83px;width:400px;text-align:center;">Amount</div>
<div style="position:absolute;top:295.31px;line-height:12.0px;font-size:8.05px;font-weight:bold;color:#fff;font-style:normal;white-space:nowrap;left:382.58px;width:400px;text-align:center;">Incl. Tax</div>
<div style="position:absolute;top:290.31px;line-height:12.0px;font-size:8.05px;font-weight:bold;color:#fff;font-style:normal;white-space:nowrap;left:429.83px;width:400px;text-align:center;">Task</div>
<div style="position:absolute;top:299.31px;line-height:12.0px;font-size:8.05px;font-weight:bold;color:#fff;font-style:normal;white-space:nowrap;left:429.83px;width:400px;text-align:center;">Group</div>
<div style="position:absolute;top:295.31px;line-height:12.0px;font-size:8.05px;font-weight:bold;color:#fff;font-style:normal;white-space:nowrap;left:486.33px;width:400px;text-align:center;">Task</div>
<div style="position:absolute;top:290.31px;line-height:12.0px;font-size:8.05px;font-weight:bold;color:#fff;font-style:normal;white-space:nowrap;left:542.33px;width:400px;text-align:center;">Total</div>
<div style="position:absolute;top:299.31px;line-height:12.0px;font-size:8.05px;font-weight:bold;color:#fff;font-style:normal;white-space:nowrap;left:542.33px;width:400px;text-align:center;">Estimate</div>
<div style="position:absolute;top:290.31px;line-height:12.0px;font-size:8.05px;font-weight:bold;color:#fff;font-style:normal;white-space:nowrap;left:598.35px;width:400px;text-align:center;">Previously</div>
<div style="position:absolute;top:299.31px;line-height:12.0px;font-size:8.05px;font-weight:bold;color:#fff;font-style:normal;white-space:nowrap;left:598.35px;width:400px;text-align:center;">Invoiced</div>
<div style="position:absolute;left:827.80px;top:288.2px;width:35.10px;height:22.8px;overflow:hidden;">
<div style="position:absolute;top:2.11px;line-height:12.0px;font-size:8.05px;font-weight:bold;color:#fff;font-style:normal;white-space:nowrap;left:7.80px;">Subtotal</div>
<div style="position:absolute;top:11.11px;line-height:12.0px;font-size:8.05px;font-weight:bold;color:#fff;font-style:normal;white-space:nowrap;left:3.50px;">Sort Order</div>
</div>
<div style="position:absolute;left:863.90px;top:288.2px;width:34.30px;height:22.8px;overflow:hidden;">
<div style="position:absolute;top:2.11px;line-height:12.0px;font-size:8.05px;font-weight:bold;color:#fff;font-style:normal;white-space:nowrap;left:2.10px;">Order On</div>
<div style="position:absolute;top:11.11px;line-height:12.0px;font-size:8.05px;font-weight:bold;color:#fff;font-style:normal;white-space:nowrap;left:5.60px;">Invoice</div>
</div>
<div style="position:absolute;top:295.31px;line-height:12.0px;font-size:8.05px;font-weight:bold;color:#fff;font-style:normal;white-space:nowrap;left:724.75px;width:400px;text-align:center;">Code</div>
<svg style="position:absolute;left:36.55px;top:290.35px;width:13.30px;height:13.30px;" viewBox="-6.65 -6.65 13.30 13.30"><defs><linearGradient id="g354" x1="0" y1="0" x2="0" y2="1"><stop offset="0" stop-color="#d3e86a"/><stop offset="0.45" stop-color="#b7d433"/><stop offset="1" stop-color="#b7d433"/></linearGradient></defs><circle cx="0" cy="0.45" r="5.65" fill="#8ca51f"/><circle cx="0" cy="-0.35" r="5.30" fill="url(#g354)"/><g transform="scale(0.991)"><rect x="-2.8" y="-2.8" width="5.6" height="5.6" rx="1.6" stroke="#e6f0a0" fill="none" stroke-width="1.2"/><path d="M-1.5 -0.3 L-0.3 1.2 L1.7 -1.5" stroke="#e6f0a0" fill="none" stroke-width="1.0"/></g></svg>
<svg style="position:absolute;left:51.4px;top:291.4px;width:9px;height:11.4px" viewBox="0 0 9 11.4"><path d="M0.8 2.6 H8.2 M3.2 1.2 H5.8" stroke="#d9d9de" stroke-width="1.3"/><path d="M1.4 3.8 H7.6 L7 10.6 H2 Z" fill="#d4d4da"/></svg>
<svg style="position:absolute;left:59.90px;top:290.40px;width:13.20px;height:13.20px;" viewBox="-6.60 -6.60 13.20 13.20"><defs><linearGradient id="g356" x1="0" y1="0" x2="0" y2="1"><stop offset="0" stop-color="#d3e86a"/><stop offset="0.45" stop-color="#b7d433"/><stop offset="1" stop-color="#b7d433"/></linearGradient></defs><circle cx="0" cy="0.44" r="5.60" fill="#8ca51f"/><circle cx="0" cy="-0.34" r="5.26" fill="url(#g356)"/><g transform="scale(0.982)"><path d="M-3.4 0 H3.4 M0 -3.4 V3.4" stroke="#fff" stroke-width="2"/></g></svg>
<svg style="position:absolute;left:72.00px;top:290.40px;width:13.20px;height:13.20px;" viewBox="-6.60 -6.60 13.20 13.20"><defs><linearGradient id="g357" x1="0" y1="0" x2="0" y2="1"><stop offset="0" stop-color="#d3e86a"/><stop offset="0.45" stop-color="#b7d433"/><stop offset="1" stop-color="#b7d433"/></linearGradient></defs><circle cx="0" cy="0.44" r="5.60" fill="#8ca51f"/><circle cx="0" cy="-0.34" r="5.26" fill="url(#g357)"/><g transform="scale(0.982)"><rect x="-2.7" y="-2.9" width="5.4" height="5.8" rx="1.4" stroke="#e6f0a0" fill="none" stroke-width="1.2"/><path d="M-1.3 -0.6 H1.3 M-1.3 1 H1.3" stroke="#e6f0a0" stroke-width="0.9"/></g></svg>
<svg style="position:absolute;left:600px;top:230px;width:130px;height:80px" viewBox="600 230 130 80"><path d="M618 255.9 H666.4 V243.4 L714.6 269.7 L666.4 296 V283.5 H618 Z" fill="#fff" stroke="#e8803a" stroke-width="2.6" stroke-linejoin="miter"/></svg>
<div style="position:absolute;left:1014.00px;top:0.00px;width:0.60px;height:130.00px;background:#fbfbfb;"></div>
</div></body></html>
